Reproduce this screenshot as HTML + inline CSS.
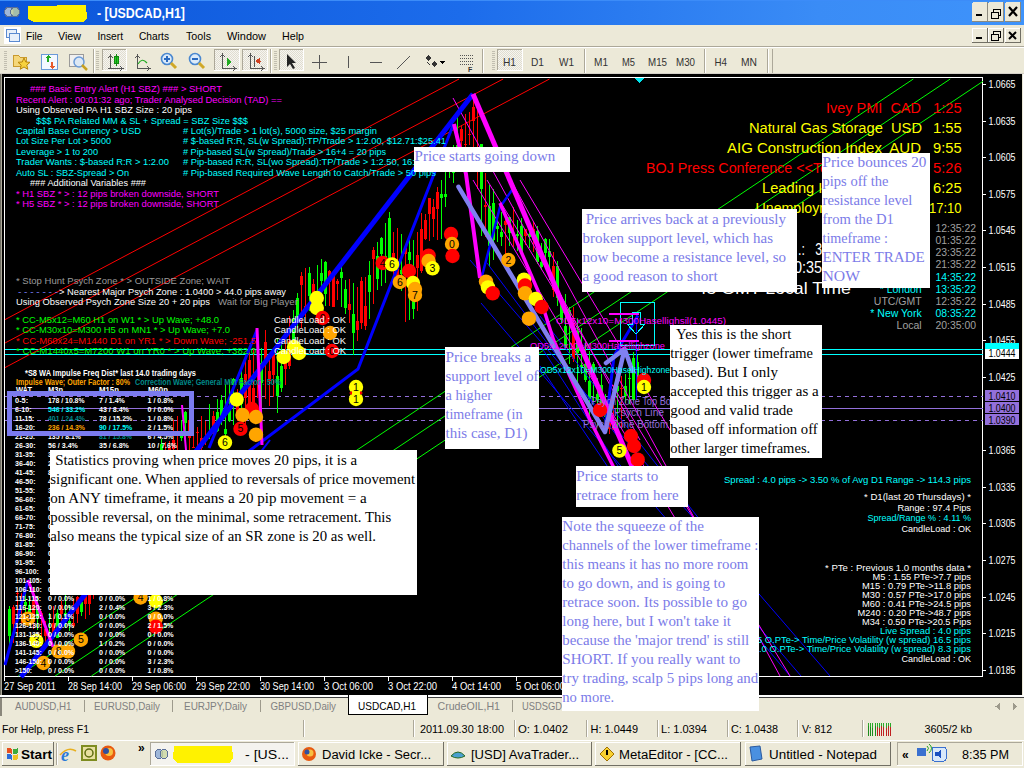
<!DOCTYPE html><html><head><meta charset="utf-8"><style>*{margin:0;padding:0}html,body{width:1024px;height:768px;overflow:hidden;background:#ECE9D8}svg{display:block;font-family:"Liberation Sans",sans-serif}text{white-space:pre}</style></head><body>
<svg width="1024" height="768" viewBox="0 0 1024 768" shape-rendering="crispEdges" text-rendering="optimizeSpeed">
<defs><linearGradient id="tg" x1="0" y1="0" x2="1" y2="0"><stop offset="0" stop-color="#0B55D9"/><stop offset="0.45" stop-color="#1C6CEB"/><stop offset="0.8" stop-color="#3A8CF6"/><stop offset="1" stop-color="#3E93FB"/></linearGradient><pattern id="chk" width="2" height="2" patternUnits="userSpaceOnUse"><rect width="2" height="2" fill="#F6F5F0"/><rect width="1" height="1" fill="#E0DDD0"/><rect x="1" y="1" width="1" height="1" fill="#E0DDD0"/></pattern></defs>
<rect x="0" y="0" width="1024" height="768" fill="#ECE9D8"/>
<rect x="0" y="0" width="1024" height="25" fill="url(#tg)"/>
<line x1="0" y1="0.5" x2="1024" y2="0.5" stroke="#3C8CF8" stroke-width="1"/>
<ellipse cx="9" cy="12" rx="4.5" ry="5" fill="#9FB7D9" stroke="#5A6F9A"/><ellipse cx="15" cy="12" rx="4.5" ry="5" fill="#C9D6A0" stroke="#5A6F9A" fill-opacity="0.8"/>
<path d="M28,6 L86,5 L87,18 L84,22 L34,22 L28,19 Z" fill="#FFF200"/>
<text x="97" y="18" fill="#fff" font-size="14" font-weight="bold" textLength="88" lengthAdjust="spacingAndGlyphs">- [USDCAD,H1]</text>
<rect x="972" y="2" width="16" height="20" fill="#ECE9D8" rx="2"/>
<line x1="972" y1="21.5" x2="988" y2="21.5" stroke="#8C8A7E" stroke-width="1"/>
<line x1="987.5" y1="2" x2="987.5" y2="22" stroke="#8C8A7E" stroke-width="1"/>
<rect x="988" y="2" width="16" height="20" fill="#ECE9D8" rx="2"/>
<line x1="988" y1="21.5" x2="1004" y2="21.5" stroke="#8C8A7E" stroke-width="1"/>
<line x1="1003.5" y1="2" x2="1003.5" y2="22" stroke="#8C8A7E" stroke-width="1"/>
<rect x="1005" y="2" width="16" height="20" fill="#ECE9D8" rx="2"/>
<line x1="1005" y1="21.5" x2="1021" y2="21.5" stroke="#8C8A7E" stroke-width="1"/>
<line x1="1020.5" y1="2" x2="1020.5" y2="22" stroke="#8C8A7E" stroke-width="1"/>
<rect x="976" y="14" width="6" height="2" fill="#000"/>
<rect x="993" y="9" width="7" height="6" fill="none" stroke="#000" stroke-width="1"/>
<rect x="991" y="12" width="7" height="6" fill="#ECE9D8" stroke="#000" stroke-width="1"/>
<path d="M1009,7 L1017,16 M1017,7 L1009,16" stroke="#000" stroke-width="2.2" shape-rendering="auto"/>
<rect x="0" y="25" width="1024" height="21" fill="#ECE9D8"/>
<rect x="4" y="27" width="17" height="17" fill="#fff"/>
<rect x="6" y="29" width="10" height="8" fill="#E8F0FA" stroke="#5A8AD0" stroke-width="1"/>
<rect x="9" y="33" width="10" height="8" fill="#E8F0FA" stroke="#5A8AD0" stroke-width="1"/>
<text x="26" y="40" fill="#000" font-size="11.5" textLength="16.5" lengthAdjust="spacingAndGlyphs">File</text>
<text x="58" y="40" fill="#000" font-size="11.5" textLength="23" lengthAdjust="spacingAndGlyphs">View</text>
<text x="97.5" y="40" fill="#000" font-size="11.5" textLength="25.5" lengthAdjust="spacingAndGlyphs">Insert</text>
<text x="139" y="40" fill="#000" font-size="11.5" textLength="30" lengthAdjust="spacingAndGlyphs">Charts</text>
<text x="186" y="40" fill="#000" font-size="11.5" textLength="25" lengthAdjust="spacingAndGlyphs">Tools</text>
<text x="227" y="40" fill="#000" font-size="11.5" textLength="39" lengthAdjust="spacingAndGlyphs">Window</text>
<text x="282" y="40" fill="#000" font-size="11.5" textLength="22" lengthAdjust="spacingAndGlyphs">Help</text>
<rect x="972" y="28" width="16" height="15" fill="#ECE9D8"/>
<line x1="972" y1="28.5" x2="988" y2="28.5" stroke="#fff" stroke-width="1"/>
<line x1="972.5" y1="28" x2="972.5" y2="43" stroke="#fff" stroke-width="1"/>
<line x1="972" y1="42.5" x2="988" y2="42.5" stroke="#716F64" stroke-width="1"/>
<line x1="987.5" y1="28" x2="987.5" y2="43" stroke="#716F64" stroke-width="1"/>
<rect x="988" y="28" width="16" height="15" fill="#ECE9D8"/>
<line x1="988" y1="28.5" x2="1004" y2="28.5" stroke="#fff" stroke-width="1"/>
<line x1="988.5" y1="28" x2="988.5" y2="43" stroke="#fff" stroke-width="1"/>
<line x1="988" y1="42.5" x2="1004" y2="42.5" stroke="#716F64" stroke-width="1"/>
<line x1="1003.5" y1="28" x2="1003.5" y2="43" stroke="#716F64" stroke-width="1"/>
<rect x="1005" y="28" width="16" height="15" fill="#ECE9D8"/>
<line x1="1005" y1="28.5" x2="1021" y2="28.5" stroke="#fff" stroke-width="1"/>
<line x1="1005.5" y1="28" x2="1005.5" y2="43" stroke="#fff" stroke-width="1"/>
<line x1="1005" y1="42.5" x2="1021" y2="42.5" stroke="#716F64" stroke-width="1"/>
<line x1="1020.5" y1="28" x2="1020.5" y2="43" stroke="#716F64" stroke-width="1"/>
<rect x="976" y="37" width="6" height="2" fill="#000"/>
<rect x="993" y="31" width="7" height="6" fill="none" stroke="#000" stroke-width="1"/>
<rect x="991" y="34" width="7" height="6" fill="#ECE9D8" stroke="#000" stroke-width="1"/>
<path d="M1009,32 L1016,39 M1016,32 L1009,39" stroke="#000" stroke-width="2" shape-rendering="auto"/>
<line x1="0" y1="46.5" x2="1024" y2="46.5" stroke="#ACA899" stroke-width="1"/>
<line x1="0" y1="47.5" x2="1024" y2="47.5" stroke="#fff" stroke-width="1"/>
<rect x="4" y="51" width="3" height="1" fill="#C1BEB0"/>
<rect x="4" y="53" width="3" height="1" fill="#C1BEB0"/>
<rect x="4" y="55" width="3" height="1" fill="#C1BEB0"/>
<rect x="4" y="57" width="3" height="1" fill="#C1BEB0"/>
<rect x="4" y="59" width="3" height="1" fill="#C1BEB0"/>
<rect x="4" y="61" width="3" height="1" fill="#C1BEB0"/>
<rect x="4" y="63" width="3" height="1" fill="#C1BEB0"/>
<rect x="4" y="65" width="3" height="1" fill="#C1BEB0"/>
<rect x="4" y="67" width="3" height="1" fill="#C1BEB0"/>
<rect x="4" y="69" width="3" height="1" fill="#C1BEB0"/>
<path d="M13,55 h5 l2,2 h6 v9 h-13 z" fill="#F5D77A" stroke="#C99A2E"/>
<path d="M24,58 l1.8,4 4.2,.3 -3.2,2.8 1,4.2 -3.8,-2.3 -3.8,2.3 1,-4.2 -3.2,-2.8 4.2,-.3z" fill="#F7D23E" stroke="#B8860B" shape-rendering="auto"/>
<rect x="41.5" y="54.5" width="16" height="15" fill="#F4F8FF" stroke="#6A9AD8" stroke-width="1"/>
<path d="M45,58 l3,-3 3,3 h-2 v4 h-2 v-4z" fill="#22AA22"/><path d="M49,66 l3,3 3,-3 h-2 v-4 h-2 v4z" fill="#E85A2A"/>
<rect x="69.5" y="54.5" width="14" height="12" fill="#F0F0F0" stroke="#9A9A9A" stroke-width="1"/>
<circle cx="79" cy="62" r="5" fill="#DDE8F4" stroke="#6A9AD8" stroke-width="1.5" shape-rendering="auto"/><path d="M82,65 l5,5" stroke="#C8A020" stroke-width="2.5" shape-rendering="auto"/>
<line x1="93.5" y1="49" x2="93.5" y2="73" stroke="#ACA899" stroke-width="1"/>
<line x1="94.5" y1="49" x2="94.5" y2="73" stroke="#fff" stroke-width="1"/>
<rect x="96" y="51" width="3" height="1" fill="#C1BEB0"/>
<rect x="96" y="53" width="3" height="1" fill="#C1BEB0"/>
<rect x="96" y="55" width="3" height="1" fill="#C1BEB0"/>
<rect x="96" y="57" width="3" height="1" fill="#C1BEB0"/>
<rect x="96" y="59" width="3" height="1" fill="#C1BEB0"/>
<rect x="96" y="61" width="3" height="1" fill="#C1BEB0"/>
<rect x="96" y="63" width="3" height="1" fill="#C1BEB0"/>
<rect x="96" y="65" width="3" height="1" fill="#C1BEB0"/>
<rect x="96" y="67" width="3" height="1" fill="#C1BEB0"/>
<rect x="96" y="69" width="3" height="1" fill="#C1BEB0"/>
<rect x="102" y="49" width="25" height="22" fill="url(#chk)"/>
<line x1="102" y1="49.5" x2="127" y2="49.5" stroke="#ACA899" stroke-width="1"/>
<line x1="102.5" y1="49" x2="102.5" y2="71" stroke="#ACA899" stroke-width="1"/>
<line x1="102" y1="70.5" x2="127" y2="70.5" stroke="#fff" stroke-width="1"/>
<line x1="126.5" y1="49" x2="126.5" y2="71" stroke="#fff" stroke-width="1"/>
<path d="M110.5,56 v12.5 h12 M108,68.5 h2.5" stroke="#555" fill="none"/><path d="M108.5,58 l2,-3 2,3 M120,66.5 l3,2 -3,2" stroke="#555" fill="none"/><rect x="114.5" y="56.5" width="4" height="7" fill="#22CC22" stroke="#118811"/><path d="M116.5,54 v12" stroke="#118811"/>
<path d="M137.5,56 v12.5 h12 M135.5,58 l2,-3 2,3 M147,66.5 l3,2 -3,2" stroke="#555" fill="none"/><path d="M138,64 q4,-7 9,-1" stroke="#22AA22" fill="none" stroke-width="1.2" shape-rendering="auto"/>
<circle cx="167" cy="59" r="5.5" fill="#DCEBFA" stroke="#4A88D0" stroke-width="1.6" shape-rendering="auto"/><path d="M171,63 l5,5" stroke="#D0A828" stroke-width="3" shape-rendering="auto"/>
<path d="M164,59 h6" stroke="#2A6AC0" stroke-width="2"/>
<path d="M167,56 v6" stroke="#2A6AC0" stroke-width="2"/>
<circle cx="195" cy="59" r="5.5" fill="#DCEBFA" stroke="#4A88D0" stroke-width="1.6" shape-rendering="auto"/><path d="M199,63 l5,5" stroke="#D0A828" stroke-width="3" shape-rendering="auto"/>
<path d="M192,59 h6" stroke="#2A6AC0" stroke-width="2"/>
<rect x="214" y="49" width="26" height="22" fill="url(#chk)"/>
<line x1="214" y1="49.5" x2="240" y2="49.5" stroke="#ACA899" stroke-width="1"/>
<line x1="214.5" y1="49" x2="214.5" y2="71" stroke="#ACA899" stroke-width="1"/>
<line x1="214" y1="70.5" x2="240" y2="70.5" stroke="#fff" stroke-width="1"/>
<line x1="239.5" y1="49" x2="239.5" y2="71" stroke="#fff" stroke-width="1"/>
<path d="M222.5,55 v13.5 h13 M220.5,57 l2,-3 2,3 M233,66.5 l3,2 -3,2" stroke="#555" fill="none"/><path d="M227,58 l5,4 -5,4z" fill="#22AA22"/>
<rect x="242" y="49" width="26" height="22" fill="url(#chk)"/>
<line x1="242" y1="49.5" x2="268" y2="49.5" stroke="#ACA899" stroke-width="1"/>
<line x1="242.5" y1="49" x2="242.5" y2="71" stroke="#ACA899" stroke-width="1"/>
<line x1="242" y1="70.5" x2="268" y2="70.5" stroke="#fff" stroke-width="1"/>
<line x1="267.5" y1="49" x2="267.5" y2="71" stroke="#fff" stroke-width="1"/>
<path d="M250.5,55 v13.5 h13 M248.5,57 l2,-3 2,3 M261,66.5 l3,2 -3,2" stroke="#555" fill="none"/><path d="M254,56 v11" stroke="#555"/><path d="M261,61 l-5,0 M256,61 l3,-2 v4z" stroke="#D04020" fill="#D04020"/>
<line x1="270.5" y1="49" x2="270.5" y2="73" stroke="#ACA899" stroke-width="1"/>
<line x1="271.5" y1="49" x2="271.5" y2="73" stroke="#fff" stroke-width="1"/>
<rect x="274" y="51" width="3" height="1" fill="#C1BEB0"/>
<rect x="274" y="53" width="3" height="1" fill="#C1BEB0"/>
<rect x="274" y="55" width="3" height="1" fill="#C1BEB0"/>
<rect x="274" y="57" width="3" height="1" fill="#C1BEB0"/>
<rect x="274" y="59" width="3" height="1" fill="#C1BEB0"/>
<rect x="274" y="61" width="3" height="1" fill="#C1BEB0"/>
<rect x="274" y="63" width="3" height="1" fill="#C1BEB0"/>
<rect x="274" y="65" width="3" height="1" fill="#C1BEB0"/>
<rect x="274" y="67" width="3" height="1" fill="#C1BEB0"/>
<rect x="274" y="69" width="3" height="1" fill="#C1BEB0"/>
<rect x="279" y="49" width="25" height="22" fill="url(#chk)"/>
<line x1="279" y1="49.5" x2="304" y2="49.5" stroke="#ACA899" stroke-width="1"/>
<line x1="279.5" y1="49" x2="279.5" y2="71" stroke="#ACA899" stroke-width="1"/>
<line x1="279" y1="70.5" x2="304" y2="70.5" stroke="#fff" stroke-width="1"/>
<line x1="303.5" y1="49" x2="303.5" y2="71" stroke="#fff" stroke-width="1"/>
<path d="M287,54 l0,13 3,-3 3,5 2,-1 -3,-5 4,0z" fill="#222" shape-rendering="auto"/>
<path d="M312,62 h15 M319.5,55 v14" stroke="#555"/>
<path d="M348.5,56 v12" stroke="#555"/>
<path d="M370,62.5 h12" stroke="#555"/>
<path d="M397,69 l13,-13" stroke="#555" shape-rendering="auto"/>
<path d="M425,58 l3,-3 3,3 -3,3z M431,64 l3,-3 3,3 -3,3z" fill="#333"/><path d="M427,62 l3,3" stroke="#333"/><path d="M440,61 h5 l-2.5,3z" fill="#000"/>
<path d="M460,55.5 h14" stroke="#555" stroke-dasharray="1,1"/>
<path d="M460,58.5 h14" stroke="#555" stroke-dasharray="1,1"/>
<path d="M460,61.5 h14" stroke="#555" stroke-dasharray="1,1"/>
<path d="M460,64.5 h14" stroke="#555" stroke-dasharray="1,1"/>
<text x="468" y="72" fill="#333" font-size="7" font-weight="bold">F</text>
<line x1="482.5" y1="49" x2="482.5" y2="73" stroke="#ACA899" stroke-width="1"/>
<line x1="483.5" y1="49" x2="483.5" y2="73" stroke="#fff" stroke-width="1"/>
<rect x="492" y="51" width="3" height="1" fill="#C1BEB0"/>
<rect x="492" y="53" width="3" height="1" fill="#C1BEB0"/>
<rect x="492" y="55" width="3" height="1" fill="#C1BEB0"/>
<rect x="492" y="57" width="3" height="1" fill="#C1BEB0"/>
<rect x="492" y="59" width="3" height="1" fill="#C1BEB0"/>
<rect x="492" y="61" width="3" height="1" fill="#C1BEB0"/>
<rect x="492" y="63" width="3" height="1" fill="#C1BEB0"/>
<rect x="492" y="65" width="3" height="1" fill="#C1BEB0"/>
<rect x="492" y="67" width="3" height="1" fill="#C1BEB0"/>
<rect x="492" y="69" width="3" height="1" fill="#C1BEB0"/>
<rect x="497" y="49" width="26" height="22" fill="url(#chk)"/>
<line x1="497" y1="49.5" x2="523" y2="49.5" stroke="#ACA899" stroke-width="1"/>
<line x1="497.5" y1="49" x2="497.5" y2="71" stroke="#ACA899" stroke-width="1"/>
<line x1="497" y1="70.5" x2="523" y2="70.5" stroke="#fff" stroke-width="1"/>
<line x1="522.5" y1="49" x2="522.5" y2="71" stroke="#fff" stroke-width="1"/>
<text x="503" y="65.5" fill="#333" font-size="10.5" textLength="13" lengthAdjust="spacingAndGlyphs">H1</text>
<text x="531" y="65.5" fill="#333" font-size="10.5" textLength="13" lengthAdjust="spacingAndGlyphs">D1</text>
<text x="559" y="65.5" fill="#333" font-size="10.5" textLength="15" lengthAdjust="spacingAndGlyphs">W1</text>
<text x="594" y="65.5" fill="#333" font-size="10.5" textLength="14" lengthAdjust="spacingAndGlyphs">M1</text>
<text x="622" y="65.5" fill="#333" font-size="10.5" textLength="13" lengthAdjust="spacingAndGlyphs">M5</text>
<text x="648" y="65.5" fill="#333" font-size="10.5" textLength="19" lengthAdjust="spacingAndGlyphs">M15</text>
<text x="676" y="65.5" fill="#333" font-size="10.5" textLength="19" lengthAdjust="spacingAndGlyphs">M30</text>
<text x="714.5" y="65.5" fill="#333" font-size="10.5" textLength="12.5" lengthAdjust="spacingAndGlyphs">H4</text>
<text x="741" y="65.5" fill="#333" font-size="10.5" textLength="16" lengthAdjust="spacingAndGlyphs">MN</text>
<line x1="584.5" y1="49" x2="584.5" y2="73" stroke="#ACA899" stroke-width="1"/>
<line x1="585.5" y1="49" x2="585.5" y2="73" stroke="#fff" stroke-width="1"/>
<line x1="704.5" y1="49" x2="704.5" y2="73" stroke="#ACA899" stroke-width="1"/>
<line x1="705.5" y1="49" x2="705.5" y2="73" stroke="#fff" stroke-width="1"/>
<line x1="767.5" y1="49" x2="767.5" y2="73" stroke="#ACA899" stroke-width="1"/>
<line x1="768.5" y1="49" x2="768.5" y2="73" stroke="#fff" stroke-width="1"/>
<line x1="772.5" y1="49" x2="772.5" y2="73" stroke="#ACA899" stroke-width="1"/>
<line x1="0" y1="73.5" x2="1024" y2="73.5" stroke="#D4D0C8" stroke-width="1"/>
<rect x="0" y="74" width="1024" height="622" fill="#000"/>
<line x1="0.5" y1="74" x2="0.5" y2="696" stroke="#716F64" stroke-width="1"/>
<line x1="1.5" y1="74" x2="1.5" y2="696" stroke="#ACA899" stroke-width="1"/>
<line x1="1023.5" y1="74" x2="1023.5" y2="696" stroke="#fff" stroke-width="1"/>
<line x1="1022.5" y1="74" x2="1022.5" y2="696" stroke="#ECE9D8" stroke-width="1"/>
<rect x="0" y="695" width="1024" height="2" fill="#fff"/>
<rect x="0" y="697" width="1024" height="1" fill="#404040"/>
<rect x="0" y="698" width="1024" height="18" fill="#ECE9D8"/>
<rect x="0" y="698" width="2" height="18" fill="#8A877B"/>
<line x1="0" y1="716.5" x2="1024" y2="716.5" stroke="#fff" stroke-width="1"/>
<text x="15" y="710" fill="#808080" font-size="11" textLength="56.5" lengthAdjust="spacingAndGlyphs">AUDUSD,H1</text>
<line x1="84.5" y1="700" x2="84.5" y2="712" stroke="#9D9A8C" stroke-width="1"/>
<text x="94" y="710" fill="#808080" font-size="11" textLength="66" lengthAdjust="spacingAndGlyphs">EURUSD,Daily</text>
<line x1="172.5" y1="700" x2="172.5" y2="712" stroke="#9D9A8C" stroke-width="1"/>
<text x="184" y="710" fill="#808080" font-size="11" textLength="63" lengthAdjust="spacingAndGlyphs">EURJPY,Daily</text>
<line x1="260.5" y1="700" x2="260.5" y2="712" stroke="#9D9A8C" stroke-width="1"/>
<text x="270.5" y="710" fill="#808080" font-size="11" textLength="65.5" lengthAdjust="spacingAndGlyphs">GBPUSD,Daily</text>
<text x="437.5" y="710" fill="#808080" font-size="11" textLength="62.5" lengthAdjust="spacingAndGlyphs">CrudeOIL,H1</text>
<line x1="512.5" y1="700" x2="512.5" y2="712" stroke="#9D9A8C" stroke-width="1"/>
<text x="522" y="710" fill="#808080" font-size="11" textLength="40" lengthAdjust="spacingAndGlyphs">USDSGD</text>
<rect x="348" y="695" width="80" height="20" fill="#fff"/>
<line x1="348.5" y1="695" x2="348.5" y2="715" stroke="#000" stroke-width="1"/>
<line x1="427.5" y1="695" x2="427.5" y2="715" stroke="#000" stroke-width="1"/>
<line x1="348" y1="714.5" x2="428" y2="714.5" stroke="#000" stroke-width="1"/>
<text x="358" y="710" fill="#000" font-size="11" textLength="58" lengthAdjust="spacingAndGlyphs">USDCAD,H1</text>
<path d="M999.5,703 l-4,3.5 4,3.5z M1013,703 l4,3.5 -4,3.5z" fill="#9D9A8C"/>
<rect x="0" y="716" width="1024" height="24" fill="#ECE9D8"/>
<text x="2" y="733" fill="#000" font-size="11.5" textLength="87" lengthAdjust="spacingAndGlyphs">For Help, press F1</text>
<line x1="303.5" y1="720" x2="303.5" y2="737" stroke="#ACA899" stroke-width="1"/>
<line x1="304.5" y1="720" x2="304.5" y2="737" stroke="#fff" stroke-width="1"/>
<line x1="413.5" y1="720" x2="413.5" y2="737" stroke="#ACA899" stroke-width="1"/>
<line x1="414.5" y1="720" x2="414.5" y2="737" stroke="#fff" stroke-width="1"/>
<line x1="514.5" y1="720" x2="514.5" y2="737" stroke="#ACA899" stroke-width="1"/>
<line x1="515.5" y1="720" x2="515.5" y2="737" stroke="#fff" stroke-width="1"/>
<line x1="586.5" y1="720" x2="586.5" y2="737" stroke="#ACA899" stroke-width="1"/>
<line x1="587.5" y1="720" x2="587.5" y2="737" stroke="#fff" stroke-width="1"/>
<line x1="657.5" y1="720" x2="657.5" y2="737" stroke="#ACA899" stroke-width="1"/>
<line x1="658.5" y1="720" x2="658.5" y2="737" stroke="#fff" stroke-width="1"/>
<line x1="727.5" y1="720" x2="727.5" y2="737" stroke="#ACA899" stroke-width="1"/>
<line x1="728.5" y1="720" x2="728.5" y2="737" stroke="#fff" stroke-width="1"/>
<line x1="797.5" y1="720" x2="797.5" y2="737" stroke="#ACA899" stroke-width="1"/>
<line x1="798.5" y1="720" x2="798.5" y2="737" stroke="#fff" stroke-width="1"/>
<line x1="862.5" y1="720" x2="862.5" y2="737" stroke="#ACA899" stroke-width="1"/>
<line x1="863.5" y1="720" x2="863.5" y2="737" stroke="#fff" stroke-width="1"/>
<text x="420" y="733" fill="#000" font-size="11.5" textLength="84" lengthAdjust="spacingAndGlyphs">2011.09.30 18:00</text>
<text x="518" y="733" fill="#000" font-size="11.5" textLength="50" lengthAdjust="spacingAndGlyphs">O: 1.0402</text>
<text x="590.5" y="733" fill="#000" font-size="11.5" textLength="47.5" lengthAdjust="spacingAndGlyphs">H: 1.0449</text>
<text x="661" y="733" fill="#000" font-size="11.5" textLength="46" lengthAdjust="spacingAndGlyphs">L: 1.0394</text>
<text x="731" y="733" fill="#000" font-size="11.5" textLength="47" lengthAdjust="spacingAndGlyphs">C: 1.0438</text>
<text x="802" y="733" fill="#000" font-size="11.5" textLength="30" lengthAdjust="spacingAndGlyphs">V: 812</text>
<text x="924.5" y="733" fill="#000" font-size="11.5" textLength="47.5" lengthAdjust="spacingAndGlyphs">3605/2 kb</text>
<rect x="868" y="723" width="1" height="13" fill="#1E8C1E"/>
<rect x="868" y="723" width="1" height="3" fill="#2AAA2A"/>
<rect x="870" y="723" width="1" height="13" fill="#1E8C1E"/>
<rect x="870" y="723" width="1" height="4" fill="#2AAA2A"/>
<rect x="872" y="723" width="1" height="13" fill="#1E8C1E"/>
<rect x="872" y="723" width="1" height="5" fill="#2AAA2A"/>
<rect x="875" y="723" width="1" height="13" fill="#1E8C1E"/>
<rect x="875" y="723" width="1" height="3" fill="#2AAA2A"/>
<rect x="877" y="723" width="1" height="13" fill="#C02020"/>
<rect x="877" y="723" width="1" height="4" fill="#2AAA2A"/>
<rect x="879" y="723" width="1" height="13" fill="#C02020"/>
<rect x="879" y="723" width="1" height="5" fill="#2AAA2A"/>
<rect x="881" y="723" width="1" height="13" fill="#C02020"/>
<rect x="881" y="723" width="1" height="3" fill="#2AAA2A"/>
<rect x="883" y="723" width="1" height="13" fill="#C02020"/>
<rect x="883" y="723" width="1" height="4" fill="#2AAA2A"/>
<rect x="886" y="723" width="1" height="13" fill="#C02020"/>
<rect x="886" y="723" width="1" height="5" fill="#2AAA2A"/>
<rect x="888" y="723" width="1" height="13" fill="#C02020"/>
<rect x="888" y="723" width="1" height="3" fill="#2AAA2A"/>
<rect x="890" y="723" width="1" height="13" fill="#C02020"/>
<rect x="890" y="723" width="1" height="4" fill="#2AAA2A"/>
<rect x="0" y="740" width="1024" height="28" fill="#ECE9D8"/>
<line x1="0" y1="740.5" x2="1024" y2="740.5" stroke="#fff" stroke-width="1"/>
<rect x="2" y="742" width="52" height="24" fill="#ECE9D8"/>
<line x1="2" y1="742.5" x2="54" y2="742.5" stroke="#fff" stroke-width="1"/>
<line x1="2.5" y1="742" x2="2.5" y2="766" stroke="#fff" stroke-width="1"/>
<line x1="2" y1="765.5" x2="54" y2="765.5" stroke="#716F64" stroke-width="1"/>
<line x1="53.5" y1="742" x2="53.5" y2="766" stroke="#716F64" stroke-width="1"/>
<path d="M7,748 q3,-1 5,1 v5 q-2,-2 -5,-1z" fill="#E8501E"/><path d="M13,749 q3,1 5,-1 v5 q-2,2 -5,1z" fill="#3CAA3C"/><path d="M7,754 q3,-1 5,1 v5 q-2,-2 -5,-1z" fill="#2C6CD8"/><path d="M13,755 q3,1 5,-1 v5 q-2,2 -5,1z" fill="#F0C020"/>
<text x="21" y="759" fill="#000" font-size="13" font-weight="bold" textLength="31" lengthAdjust="spacingAndGlyphs">Start</text>
<line x1="56.5" y1="743" x2="56.5" y2="765" stroke="#ACA899" stroke-width="1"/>
<line x1="57.5" y1="743" x2="57.5" y2="765" stroke="#fff" stroke-width="1"/>
<text x="61" y="761" fill="#2A7AD8" font-size="18" font-weight="bold" font-style="italic" font-family="Liberation Serif">e</text>
<path d="M60,755 q8,-9 16,-4" stroke="#E8B020" stroke-width="1.5" fill="none" shape-rendering="auto"/>
<rect x="81" y="745" width="16" height="16" fill="#7E8C20"/>
<rect x="83" y="747" width="12" height="12" fill="#E8E0A0"/>
<circle cx="89" cy="753" r="4" fill="none" stroke="#5E6C10" stroke-width="1.5" shape-rendering="auto"/>
<circle cx="108" cy="753" r="7.5" fill="#E85A10" shape-rendering="auto"/><circle cx="109" cy="752" r="4" fill="#F8C040" shape-rendering="auto"/><circle cx="106" cy="751" r="3" fill="#3050A0" shape-rendering="auto"/>
<text x="138" y="752" fill="#000" font-size="12" font-weight="bold">»</text>
<rect x="150" y="742" width="145" height="24" fill="#F4F3EE"/>
<line x1="150" y1="742.5" x2="295" y2="742.5" stroke="#ACA899" stroke-width="1"/>
<line x1="150.5" y1="742" x2="150.5" y2="766" stroke="#ACA899" stroke-width="1"/>
<line x1="150" y1="765.5" x2="295" y2="765.5" stroke="#fff" stroke-width="1"/>
<line x1="294.5" y1="742" x2="294.5" y2="766" stroke="#fff" stroke-width="1"/>
<ellipse cx="159" cy="754" rx="4" ry="4.5" fill="#9FB7D9" stroke="#5A6F9A"/><ellipse cx="164" cy="754" rx="4" ry="4.5" fill="#C9D6A0" stroke="#5A6F9A" fill-opacity="0.8"/>
<path d="M174,746 L232,746 L233,758 L230,763 L178,763 L173,759 Z" fill="#FFF200"/>
<text x="245" y="759" fill="#000" font-size="12" textLength="44" lengthAdjust="spacingAndGlyphs">- [US...</text>
<rect x="298" y="742" width="146" height="24" fill="#ECE9D8"/>
<line x1="298" y1="742.5" x2="444" y2="742.5" stroke="#fff" stroke-width="1"/>
<line x1="298.5" y1="742" x2="298.5" y2="766" stroke="#fff" stroke-width="1"/>
<line x1="298" y1="765.5" x2="444" y2="765.5" stroke="#716F64" stroke-width="1"/>
<line x1="443.5" y1="742" x2="443.5" y2="766" stroke="#716F64" stroke-width="1"/>
<text x="322" y="759" fill="#000" font-size="12" textLength="109" lengthAdjust="spacingAndGlyphs">David Icke - Secr...</text>
<rect x="447" y="742" width="145" height="24" fill="#ECE9D8"/>
<line x1="447" y1="742.5" x2="592" y2="742.5" stroke="#fff" stroke-width="1"/>
<line x1="447.5" y1="742" x2="447.5" y2="766" stroke="#fff" stroke-width="1"/>
<line x1="447" y1="765.5" x2="592" y2="765.5" stroke="#716F64" stroke-width="1"/>
<line x1="591.5" y1="742" x2="591.5" y2="766" stroke="#716F64" stroke-width="1"/>
<text x="471" y="759" fill="#000" font-size="12" textLength="108" lengthAdjust="spacingAndGlyphs">[USD] AvaTrader...</text>
<rect x="595" y="742" width="146" height="24" fill="#ECE9D8"/>
<line x1="595" y1="742.5" x2="741" y2="742.5" stroke="#fff" stroke-width="1"/>
<line x1="595.5" y1="742" x2="595.5" y2="766" stroke="#fff" stroke-width="1"/>
<line x1="595" y1="765.5" x2="741" y2="765.5" stroke="#716F64" stroke-width="1"/>
<line x1="740.5" y1="742" x2="740.5" y2="766" stroke="#716F64" stroke-width="1"/>
<text x="619" y="759" fill="#000" font-size="12" textLength="109" lengthAdjust="spacingAndGlyphs">MetaEditor - [CC...</text>
<rect x="745" y="742" width="146" height="24" fill="#ECE9D8"/>
<line x1="745" y1="742.5" x2="891" y2="742.5" stroke="#fff" stroke-width="1"/>
<line x1="745.5" y1="742" x2="745.5" y2="766" stroke="#fff" stroke-width="1"/>
<line x1="745" y1="765.5" x2="891" y2="765.5" stroke="#716F64" stroke-width="1"/>
<line x1="890.5" y1="742" x2="890.5" y2="766" stroke="#716F64" stroke-width="1"/>
<text x="769" y="759" fill="#000" font-size="12" textLength="108" lengthAdjust="spacingAndGlyphs">Untitled - Notepad</text>
<circle cx="309" cy="754" r="7" fill="#E85A10" shape-rendering="auto"/><circle cx="310" cy="753" r="3.5" fill="#F8C040" shape-rendering="auto"/><circle cx="307" cy="752" r="2.5" fill="#3050A0" shape-rendering="auto"/>
<path d="M451,756 q7,-8 14,0 q-7,4 -14,0z" fill="#4AA0D0" stroke="#2A6A20" shape-rendering="auto"/>
<path d="M607,747 l7,7 -7,7 -7,-7z" fill="#F8D030" stroke="#A07000" shape-rendering="auto"/><path d="M607,750 v5" stroke="#000" stroke-width="1.5"/>
<path d="M750,747 l10,-1 2,13 -10,2z" fill="#4A90E0" stroke="#2A5AA0" shape-rendering="auto"/>
<line x1="897" y1="742.5" x2="1023" y2="742.5" stroke="#ACA899" stroke-width="1"/>
<line x1="897.5" y1="742" x2="897.5" y2="766" stroke="#ACA899" stroke-width="1"/>
<line x1="897" y1="765.5" x2="1023" y2="765.5" stroke="#fff" stroke-width="1"/>
<line x1="1022.5" y1="742" x2="1022.5" y2="766" stroke="#fff" stroke-width="1"/>
<text x="902" y="759" fill="#000" font-size="12" font-weight="bold">«</text>
<rect x="917" y="748" width="9" height="8" fill="#3A70D0"/><path d="M927,746 q3,2 0,5 M929,744 q5,4 0,9" stroke="#20A020" fill="none" shape-rendering="auto"/>
<rect x="932" y="747" width="14" height="14" fill="#D8E8FA" stroke="#3A70D0" rx="2"/><path d="M935,752 h3 l3,-3 v10 l-3,-3 h-3z" fill="#1A50C0"/>
<text x="962" y="759" fill="#000" font-size="12" textLength="47" lengthAdjust="spacingAndGlyphs">8:35 PM</text>
<line x1="4" y1="77.5" x2="983" y2="77.5" stroke="#fff" stroke-width="1"/>
<line x1="4.5" y1="77" x2="4.5" y2="677" stroke="#fff" stroke-width="1"/>
<line x1="982.5" y1="77" x2="982.5" y2="677" stroke="#fff" stroke-width="1"/>
<line x1="4" y1="676.5" x2="983" y2="676.5" stroke="#fff" stroke-width="1"/>
<path d="M635,78 h9 l-4.5,5z" fill="#00E5EE"/>
<line x1="983" y1="84.5" x2="986" y2="84.5" stroke="#fff" stroke-width="1"/>
<text x="988.5" y="88" fill="#fff" font-size="10" textLength="27" lengthAdjust="spacingAndGlyphs">1.0665</text>
<line x1="983" y1="121.5" x2="986" y2="121.5" stroke="#fff" stroke-width="1"/>
<text x="988.5" y="125" fill="#fff" font-size="10" textLength="27" lengthAdjust="spacingAndGlyphs">1.0635</text>
<line x1="983" y1="157.5" x2="986" y2="157.5" stroke="#fff" stroke-width="1"/>
<text x="988.5" y="161" fill="#fff" font-size="10" textLength="27" lengthAdjust="spacingAndGlyphs">1.0605</text>
<line x1="983" y1="194.5" x2="986" y2="194.5" stroke="#fff" stroke-width="1"/>
<text x="988.5" y="198" fill="#fff" font-size="10" textLength="27" lengthAdjust="spacingAndGlyphs">1.0575</text>
<line x1="983" y1="230.5" x2="986" y2="230.5" stroke="#fff" stroke-width="1"/>
<text x="988.5" y="234" fill="#fff" font-size="10" textLength="27" lengthAdjust="spacingAndGlyphs">1.0545</text>
<line x1="983" y1="267.5" x2="986" y2="267.5" stroke="#fff" stroke-width="1"/>
<text x="988.5" y="271" fill="#fff" font-size="10" textLength="27" lengthAdjust="spacingAndGlyphs">1.0515</text>
<line x1="983" y1="304.5" x2="986" y2="304.5" stroke="#fff" stroke-width="1"/>
<text x="988.5" y="308" fill="#fff" font-size="10" textLength="27" lengthAdjust="spacingAndGlyphs">1.0485</text>
<line x1="983" y1="340.5" x2="986" y2="340.5" stroke="#fff" stroke-width="1"/>
<text x="988.5" y="344" fill="#fff" font-size="10" textLength="27" lengthAdjust="spacingAndGlyphs">1.0455</text>
<line x1="983" y1="377.5" x2="986" y2="377.5" stroke="#fff" stroke-width="1"/>
<text x="988.5" y="381" fill="#fff" font-size="10" textLength="27" lengthAdjust="spacingAndGlyphs">1.0425</text>
<line x1="983" y1="450.5" x2="986" y2="450.5" stroke="#fff" stroke-width="1"/>
<text x="988.5" y="454" fill="#fff" font-size="10" textLength="27" lengthAdjust="spacingAndGlyphs">1.0365</text>
<line x1="983" y1="487.5" x2="986" y2="487.5" stroke="#fff" stroke-width="1"/>
<text x="988.5" y="491" fill="#fff" font-size="10" textLength="27" lengthAdjust="spacingAndGlyphs">1.0335</text>
<line x1="983" y1="523.5" x2="986" y2="523.5" stroke="#fff" stroke-width="1"/>
<text x="988.5" y="527" fill="#fff" font-size="10" textLength="27" lengthAdjust="spacingAndGlyphs">1.0305</text>
<line x1="983" y1="560.5" x2="986" y2="560.5" stroke="#fff" stroke-width="1"/>
<text x="988.5" y="564" fill="#fff" font-size="10" textLength="27" lengthAdjust="spacingAndGlyphs">1.0275</text>
<line x1="983" y1="597.5" x2="986" y2="597.5" stroke="#fff" stroke-width="1"/>
<text x="988.5" y="601" fill="#fff" font-size="10" textLength="27" lengthAdjust="spacingAndGlyphs">1.0245</text>
<line x1="983" y1="633.5" x2="986" y2="633.5" stroke="#fff" stroke-width="1"/>
<text x="988.5" y="637" fill="#fff" font-size="10" textLength="27" lengthAdjust="spacingAndGlyphs">1.0215</text>
<line x1="983" y1="670.5" x2="986" y2="670.5" stroke="#fff" stroke-width="1"/>
<text x="988.5" y="674" fill="#fff" font-size="10" textLength="27" lengthAdjust="spacingAndGlyphs">1.0185</text>
<rect x="985" y="343" width="34" height="6" fill="#00FFFF"/>
<rect x="985" y="348.5" width="34" height="10.5" fill="#fff"/>
<text x="988.5" y="357" fill="#000" font-size="10" textLength="27" lengthAdjust="spacingAndGlyphs">1.0444</text>
<rect x="985" y="390" width="34" height="11" fill="#9370DB"/>
<text x="988.5" y="399.5" fill="#000" font-size="10" textLength="27" lengthAdjust="spacingAndGlyphs">1.0410</text>
<rect x="985" y="402" width="34" height="11" fill="#9370DB"/>
<text x="988.5" y="411.5" fill="#000" font-size="10" textLength="27" lengthAdjust="spacingAndGlyphs">1.0400</text>
<rect x="985" y="414" width="34" height="11" fill="#9370DB"/>
<text x="988.5" y="423.5" fill="#000" font-size="10" textLength="27" lengthAdjust="spacingAndGlyphs">1.0390</text>
<line x1="4.5" y1="677" x2="4.5" y2="681" stroke="#fff" stroke-width="1"/>
<text x="4" y="690" fill="#fff" font-size="10" textLength="52" lengthAdjust="spacingAndGlyphs">27 Sep 2011</text>
<line x1="68.5" y1="677" x2="68.5" y2="681" stroke="#fff" stroke-width="1"/>
<text x="68" y="690" fill="#fff" font-size="10" textLength="54" lengthAdjust="spacingAndGlyphs">28 Sep 14:00</text>
<line x1="132.5" y1="677" x2="132.5" y2="681" stroke="#fff" stroke-width="1"/>
<text x="132" y="690" fill="#fff" font-size="10" textLength="54" lengthAdjust="spacingAndGlyphs">29 Sep 06:00</text>
<line x1="196.5" y1="677" x2="196.5" y2="681" stroke="#fff" stroke-width="1"/>
<text x="196" y="690" fill="#fff" font-size="10" textLength="54" lengthAdjust="spacingAndGlyphs">29 Sep 22:00</text>
<line x1="260.5" y1="677" x2="260.5" y2="681" stroke="#fff" stroke-width="1"/>
<text x="260" y="690" fill="#fff" font-size="10" textLength="54" lengthAdjust="spacingAndGlyphs">30 Sep 14:00</text>
<line x1="324.5" y1="677" x2="324.5" y2="681" stroke="#fff" stroke-width="1"/>
<text x="324" y="690" fill="#fff" font-size="10" textLength="49" lengthAdjust="spacingAndGlyphs">3 Oct 06:00</text>
<line x1="388.5" y1="677" x2="388.5" y2="681" stroke="#fff" stroke-width="1"/>
<text x="388" y="690" fill="#fff" font-size="10" textLength="49" lengthAdjust="spacingAndGlyphs">3 Oct 22:00</text>
<line x1="452.5" y1="677" x2="452.5" y2="681" stroke="#fff" stroke-width="1"/>
<text x="452" y="690" fill="#fff" font-size="10" textLength="49" lengthAdjust="spacingAndGlyphs">4 Oct 14:00</text>
<line x1="516.5" y1="677" x2="516.5" y2="681" stroke="#fff" stroke-width="1"/>
<text x="516" y="690" fill="#fff" font-size="10" textLength="49" lengthAdjust="spacingAndGlyphs">5 Oct 06:00</text>
<line x1="5" y1="349.5" x2="983" y2="349.5" stroke="#00FFFF" stroke-width="1.2"/>
<line x1="5" y1="354.5" x2="983" y2="354.5" stroke="#00FFFF" stroke-width="1.2"/>
<line x1="5" y1="396.5" x2="983" y2="396.5" stroke="#9370DB" stroke-width="1" stroke-dasharray="4,4"/>
<line x1="5" y1="408.5" x2="983" y2="408.5" stroke="#9370DB" stroke-width="1"/>
<line x1="5" y1="420.5" x2="983" y2="420.5" stroke="#9370DB" stroke-width="1" stroke-dasharray="4,4"/>
<g shape-rendering="auto">
<line x1="5" y1="319.6" x2="459.0" y2="79" stroke="#FF0000" stroke-width="1"/>
<line x1="5" y1="343.0" x2="503.1" y2="79" stroke="#FF0000" stroke-width="1"/>
<line x1="5" y1="367.6" x2="549.5" y2="79" stroke="#FF0000" stroke-width="1"/>
<line x1="18.2" y1="676" x2="913.3" y2="79" stroke="#00FF00" stroke-width="1"/>
<line x1="55.1" y1="676" x2="950.2" y2="79" stroke="#00FF00" stroke-width="1"/>
<line x1="91.4" y1="676" x2="983" y2="81.3" stroke="#00FF00" stroke-width="1"/>
</g>
<rect x="9" y="606" width="1" height="46" fill="#00FF00"/>
<rect x="8" y="609" width="3" height="27" fill="#00FF00"/>
<rect x="13" y="605" width="1" height="38" fill="#FF0000"/>
<rect x="12" y="607" width="3" height="17" fill="#FF0000"/>
<rect x="17" y="590" width="1" height="46" fill="#FF0000"/>
<rect x="16" y="593" width="3" height="1" fill="#FF0000"/>
<rect x="21" y="593" width="1" height="30" fill="#FF0000"/>
<rect x="20" y="596" width="3" height="3" fill="#FF0000"/>
<rect x="25" y="593" width="1" height="22" fill="#00FF00"/>
<rect x="24" y="602" width="3" height="4" fill="#00FF00"/>
<rect x="29" y="596" width="1" height="30" fill="#00FF00"/>
<rect x="28" y="605" width="3" height="17" fill="#00FF00"/>
<rect x="33" y="588" width="1" height="41" fill="#FF0000"/>
<rect x="32" y="601" width="3" height="21" fill="#FF0000"/>
<rect x="37" y="597" width="1" height="33" fill="#00FF00"/>
<rect x="36" y="609" width="3" height="9" fill="#00FF00"/>
<rect x="41" y="611" width="1" height="35" fill="#FF0000"/>
<rect x="40" y="613" width="3" height="5" fill="#FF0000"/>
<rect x="45" y="621" width="1" height="28" fill="#FF0000"/>
<rect x="44" y="629" width="3" height="7" fill="#FF0000"/>
<rect x="49" y="613" width="1" height="33" fill="#00FF00"/>
<rect x="48" y="636" width="3" height="3" fill="#00FF00"/>
<rect x="53" y="606" width="1" height="32" fill="#FF0000"/>
<rect x="52" y="623" width="3" height="11" fill="#FF0000"/>
<rect x="57" y="609" width="1" height="29" fill="#00FF00"/>
<rect x="56" y="613" width="3" height="25" fill="#00FF00"/>
<rect x="61" y="601" width="1" height="26" fill="#FF0000"/>
<rect x="60" y="605" width="3" height="9" fill="#FF0000"/>
<rect x="65" y="594" width="1" height="34" fill="#00FF00"/>
<rect x="64" y="613" width="3" height="6" fill="#00FF00"/>
<rect x="69" y="605" width="1" height="26" fill="#00FF00"/>
<rect x="68" y="621" width="3" height="3" fill="#00FF00"/>
<rect x="73" y="599" width="1" height="29" fill="#FF0000"/>
<rect x="72" y="623" width="3" height="3" fill="#FF0000"/>
<rect x="77" y="596" width="1" height="27" fill="#FF0000"/>
<rect x="76" y="597" width="3" height="17" fill="#FF0000"/>
<rect x="81" y="597" width="1" height="19" fill="#00FF00"/>
<rect x="80" y="602" width="3" height="10" fill="#00FF00"/>
<rect x="85" y="591" width="1" height="28" fill="#FF0000"/>
<rect x="84" y="592" width="3" height="12" fill="#FF0000"/>
<rect x="89" y="571" width="1" height="44" fill="#FF0000"/>
<rect x="88" y="573" width="3" height="31" fill="#FF0000"/>
<rect x="93" y="553" width="1" height="46" fill="#FF0000"/>
<rect x="92" y="571" width="3" height="22" fill="#FF0000"/>
<rect x="97" y="535" width="1" height="46" fill="#FF0000"/>
<rect x="96" y="560" width="3" height="16" fill="#FF0000"/>
<rect x="101" y="536" width="1" height="25" fill="#FF0000"/>
<rect x="100" y="543" width="3" height="3" fill="#FF0000"/>
<rect x="105" y="521" width="1" height="34" fill="#00FF00"/>
<rect x="104" y="526" width="3" height="27" fill="#00FF00"/>
<rect x="109" y="512" width="1" height="51" fill="#FF0000"/>
<rect x="108" y="524" width="3" height="13" fill="#FF0000"/>
<rect x="113" y="515" width="1" height="42" fill="#FF0000"/>
<rect x="112" y="515" width="3" height="17" fill="#FF0000"/>
<rect x="117" y="505" width="1" height="40" fill="#00FF00"/>
<rect x="116" y="533" width="3" height="11" fill="#00FF00"/>
<rect x="121" y="503" width="1" height="36" fill="#00FF00"/>
<rect x="120" y="505" width="3" height="23" fill="#00FF00"/>
<rect x="125" y="506" width="1" height="25" fill="#00FF00"/>
<rect x="124" y="525" width="3" height="2" fill="#00FF00"/>
<rect x="129" y="490" width="1" height="43" fill="#FF0000"/>
<rect x="128" y="494" width="3" height="23" fill="#FF0000"/>
<rect x="133" y="477" width="1" height="57" fill="#00FF00"/>
<rect x="132" y="487" width="3" height="3" fill="#00FF00"/>
<rect x="137" y="478" width="1" height="52" fill="#FF0000"/>
<rect x="136" y="478" width="3" height="8" fill="#FF0000"/>
<rect x="141" y="467" width="1" height="50" fill="#FF0000"/>
<rect x="140" y="469" width="3" height="43" fill="#FF0000"/>
<rect x="145" y="473" width="1" height="44" fill="#FF0000"/>
<rect x="144" y="484" width="3" height="4" fill="#FF0000"/>
<rect x="149" y="462" width="1" height="50" fill="#FF0000"/>
<rect x="148" y="505" width="3" height="7" fill="#FF0000"/>
<rect x="153" y="459" width="1" height="40" fill="#FF0000"/>
<rect x="152" y="463" width="3" height="1" fill="#FF0000"/>
<rect x="157" y="451" width="1" height="47" fill="#00FF00"/>
<rect x="156" y="459" width="3" height="32" fill="#00FF00"/>
<rect x="161" y="439" width="1" height="39" fill="#00FF00"/>
<rect x="160" y="444" width="3" height="15" fill="#00FF00"/>
<rect x="165" y="442" width="1" height="46" fill="#FF0000"/>
<rect x="164" y="466" width="3" height="21" fill="#FF0000"/>
<rect x="169" y="441" width="1" height="25" fill="#FF0000"/>
<rect x="168" y="448" width="3" height="3" fill="#FF0000"/>
<rect x="173" y="420" width="1" height="36" fill="#FF0000"/>
<rect x="172" y="440" width="3" height="9" fill="#FF0000"/>
<rect x="177" y="416" width="1" height="42" fill="#FF0000"/>
<rect x="176" y="450" width="3" height="7" fill="#FF0000"/>
<rect x="181" y="420" width="1" height="21" fill="#00FF00"/>
<rect x="180" y="436" width="3" height="2" fill="#00FF00"/>
<rect x="185" y="411" width="1" height="35" fill="#00FF00"/>
<rect x="184" y="412" width="3" height="11" fill="#00FF00"/>
<rect x="189" y="410" width="1" height="41" fill="#FF0000"/>
<rect x="188" y="420" width="3" height="18" fill="#FF0000"/>
<rect x="193" y="426" width="1" height="22" fill="#FF0000"/>
<rect x="192" y="447" width="3" height="1" fill="#FF0000"/>
<rect x="197" y="427" width="1" height="22" fill="#FF0000"/>
<rect x="196" y="432" width="3" height="1" fill="#FF0000"/>
<rect x="201" y="416" width="1" height="35" fill="#FF0000"/>
<rect x="200" y="438" width="3" height="10" fill="#FF0000"/>
<rect x="205" y="421" width="1" height="24" fill="#FF0000"/>
<rect x="204" y="437" width="3" height="3" fill="#FF0000"/>
<rect x="209" y="404" width="1" height="35" fill="#00FF00"/>
<rect x="208" y="432" width="3" height="4" fill="#00FF00"/>
<rect x="213" y="411" width="1" height="29" fill="#FF0000"/>
<rect x="212" y="416" width="3" height="18" fill="#FF0000"/>
<rect x="217" y="399" width="1" height="33" fill="#00FF00"/>
<rect x="216" y="412" width="3" height="19" fill="#00FF00"/>
<rect x="221" y="395" width="1" height="30" fill="#00FF00"/>
<rect x="220" y="400" width="3" height="17" fill="#00FF00"/>
<rect x="225" y="384" width="1" height="55" fill="#00FF00"/>
<rect x="224" y="429" width="3" height="5" fill="#00FF00"/>
<rect x="229" y="380" width="1" height="42" fill="#00FF00"/>
<rect x="228" y="407" width="3" height="14" fill="#00FF00"/>
<rect x="233" y="378" width="1" height="47" fill="#00FF00"/>
<rect x="232" y="379" width="3" height="6" fill="#00FF00"/>
<rect x="237" y="389" width="1" height="32" fill="#FF0000"/>
<rect x="236" y="405" width="3" height="13" fill="#FF0000"/>
<rect x="241" y="369" width="1" height="43" fill="#00FF00"/>
<rect x="240" y="378" width="3" height="26" fill="#00FF00"/>
<rect x="245" y="357" width="1" height="68" fill="#FF0000"/>
<rect x="244" y="374" width="3" height="24" fill="#FF0000"/>
<rect x="249" y="351" width="1" height="68" fill="#FF0000"/>
<rect x="248" y="360" width="3" height="53" fill="#FF0000"/>
<rect x="253" y="348" width="1" height="68" fill="#FF0000"/>
<rect x="252" y="388" width="3" height="22" fill="#FF0000"/>
<rect x="257" y="345" width="1" height="53" fill="#FF0000"/>
<rect x="256" y="371" width="3" height="2" fill="#FF0000"/>
<rect x="261" y="348" width="1" height="80" fill="#00FF00"/>
<rect x="260" y="363" width="3" height="20" fill="#00FF00"/>
<rect x="265" y="330" width="1" height="69" fill="#FF0000"/>
<rect x="264" y="342" width="3" height="21" fill="#FF0000"/>
<rect x="269" y="354" width="1" height="52" fill="#FF0000"/>
<rect x="268" y="371" width="3" height="10" fill="#FF0000"/>
<rect x="273" y="348" width="1" height="49" fill="#FF0000"/>
<rect x="272" y="353" width="3" height="22" fill="#FF0000"/>
<rect x="277" y="338" width="1" height="75" fill="#00FF00"/>
<rect x="276" y="376" width="3" height="20" fill="#00FF00"/>
<rect x="281" y="344" width="1" height="48" fill="#00FF00"/>
<rect x="280" y="366" width="3" height="22" fill="#00FF00"/>
<rect x="285" y="333" width="1" height="52" fill="#FF0000"/>
<rect x="284" y="360" width="3" height="9" fill="#FF0000"/>
<rect x="289" y="316" width="1" height="53" fill="#FF0000"/>
<rect x="288" y="341" width="3" height="25" fill="#FF0000"/>
<rect x="293" y="310" width="1" height="35" fill="#00FF00"/>
<rect x="292" y="319" width="3" height="24" fill="#00FF00"/>
<rect x="297" y="293" width="1" height="35" fill="#00FF00"/>
<rect x="296" y="298" width="3" height="24" fill="#00FF00"/>
<rect x="301" y="272" width="1" height="56" fill="#FF0000"/>
<rect x="300" y="276" width="3" height="9" fill="#FF0000"/>
<rect x="305" y="268" width="1" height="49" fill="#FF0000"/>
<rect x="304" y="306" width="3" height="6" fill="#FF0000"/>
<rect x="309" y="267" width="1" height="44" fill="#00FF00"/>
<rect x="308" y="273" width="3" height="23" fill="#00FF00"/>
<rect x="313" y="279" width="1" height="21" fill="#FF0000"/>
<rect x="312" y="284" width="3" height="16" fill="#FF0000"/>
<rect x="317" y="265" width="1" height="40" fill="#00FF00"/>
<rect x="316" y="298" width="3" height="6" fill="#00FF00"/>
<rect x="321" y="259" width="1" height="44" fill="#00FF00"/>
<rect x="320" y="273" width="3" height="8" fill="#00FF00"/>
<rect x="325" y="261" width="1" height="45" fill="#00FF00"/>
<rect x="324" y="262" width="3" height="32" fill="#00FF00"/>
<rect x="329" y="270" width="1" height="36" fill="#FF0000"/>
<rect x="328" y="271" width="3" height="11" fill="#FF0000"/>
<rect x="333" y="274" width="1" height="33" fill="#FF0000"/>
<rect x="332" y="276" width="3" height="31" fill="#FF0000"/>
<rect x="337" y="279" width="1" height="21" fill="#FF0000"/>
<rect x="336" y="281" width="3" height="3" fill="#FF0000"/>
<rect x="341" y="267" width="1" height="40" fill="#00FF00"/>
<rect x="340" y="272" width="3" height="6" fill="#00FF00"/>
<rect x="345" y="280" width="1" height="34" fill="#00FF00"/>
<rect x="344" y="289" width="3" height="19" fill="#00FF00"/>
<rect x="349" y="279" width="1" height="44" fill="#FF0000"/>
<rect x="348" y="304" width="3" height="6" fill="#FF0000"/>
<rect x="353" y="283" width="1" height="72" fill="#00FF00"/>
<rect x="352" y="314" width="3" height="19" fill="#00FF00"/>
<rect x="357" y="287" width="1" height="54" fill="#FF0000"/>
<rect x="356" y="321" width="3" height="9" fill="#FF0000"/>
<rect x="361" y="277" width="1" height="52" fill="#FF0000"/>
<rect x="360" y="281" width="3" height="42" fill="#FF0000"/>
<rect x="365" y="277" width="1" height="53" fill="#FF0000"/>
<rect x="364" y="306" width="3" height="20" fill="#FF0000"/>
<rect x="369" y="261" width="1" height="58" fill="#00FF00"/>
<rect x="368" y="275" width="3" height="17" fill="#00FF00"/>
<rect x="373" y="247" width="1" height="57" fill="#FF0000"/>
<rect x="372" y="250" width="3" height="9" fill="#FF0000"/>
<rect x="377" y="242" width="1" height="48" fill="#00FF00"/>
<rect x="376" y="256" width="3" height="23" fill="#00FF00"/>
<rect x="381" y="237" width="1" height="49" fill="#00FF00"/>
<rect x="380" y="238" width="3" height="16" fill="#00FF00"/>
<rect x="385" y="223" width="1" height="60" fill="#00FF00"/>
<rect x="384" y="256" width="3" height="11" fill="#00FF00"/>
<rect x="389" y="212" width="1" height="53" fill="#00FF00"/>
<rect x="388" y="218" width="3" height="44" fill="#00FF00"/>
<rect x="393" y="232" width="1" height="43" fill="#FF0000"/>
<rect x="392" y="253" width="3" height="15" fill="#FF0000"/>
<rect x="397" y="228" width="1" height="59" fill="#FF0000"/>
<rect x="396" y="269" width="3" height="17" fill="#FF0000"/>
<rect x="401" y="234" width="1" height="57" fill="#00FF00"/>
<rect x="400" y="270" width="3" height="4" fill="#00FF00"/>
<rect x="405" y="244" width="1" height="78" fill="#FF0000"/>
<rect x="404" y="248" width="3" height="6" fill="#FF0000"/>
<rect x="409" y="238" width="1" height="82" fill="#00FF00"/>
<rect x="408" y="252" width="3" height="8" fill="#00FF00"/>
<rect x="413" y="240" width="1" height="79" fill="#00FF00"/>
<rect x="412" y="293" width="3" height="16" fill="#00FF00"/>
<rect x="417" y="232" width="1" height="79" fill="#FF0000"/>
<rect x="416" y="255" width="3" height="13" fill="#FF0000"/>
<rect x="421" y="213" width="1" height="60" fill="#FF0000"/>
<rect x="420" y="229" width="3" height="42" fill="#FF0000"/>
<rect x="425" y="214" width="1" height="26" fill="#FF0000"/>
<rect x="424" y="220" width="3" height="19" fill="#FF0000"/>
<rect x="429" y="198" width="1" height="43" fill="#FF0000"/>
<rect x="428" y="198" width="3" height="16" fill="#FF0000"/>
<rect x="433" y="199" width="1" height="38" fill="#FF0000"/>
<rect x="432" y="207" width="3" height="12" fill="#FF0000"/>
<rect x="437" y="187" width="1" height="53" fill="#FF0000"/>
<rect x="436" y="192" width="3" height="17" fill="#FF0000"/>
<rect x="441" y="180" width="1" height="59" fill="#00FF00"/>
<rect x="440" y="194" width="3" height="4" fill="#00FF00"/>
<rect x="445" y="170" width="1" height="37" fill="#00FF00"/>
<rect x="444" y="194" width="3" height="3" fill="#00FF00"/>
<rect x="449" y="151" width="1" height="27" fill="#00FF00"/>
<rect x="448" y="159" width="3" height="2" fill="#00FF00"/>
<rect x="453" y="145" width="1" height="38" fill="#00FF00"/>
<rect x="452" y="170" width="3" height="3" fill="#00FF00"/>
<rect x="457" y="116" width="1" height="46" fill="#00FF00"/>
<rect x="456" y="145" width="3" height="12" fill="#00FF00"/>
<rect x="461" y="125" width="1" height="32" fill="#FF0000"/>
<rect x="460" y="129" width="3" height="12" fill="#FF0000"/>
<rect x="465" y="114" width="1" height="37" fill="#FF0000"/>
<rect x="464" y="144" width="3" height="1" fill="#FF0000"/>
<rect x="469" y="112" width="1" height="33" fill="#FF0000"/>
<rect x="468" y="134" width="3" height="1" fill="#FF0000"/>
<rect x="473" y="99" width="1" height="60" fill="#FF0000"/>
<rect x="472" y="107" width="3" height="14" fill="#FF0000"/>
<rect x="477" y="102" width="1" height="87" fill="#FF0000"/>
<rect x="476" y="151" width="3" height="6" fill="#FF0000"/>
<rect x="481" y="144" width="1" height="92" fill="#00FF00"/>
<rect x="480" y="144" width="3" height="45" fill="#00FF00"/>
<rect x="485" y="173" width="1" height="64" fill="#FF0000"/>
<rect x="484" y="205" width="3" height="2" fill="#FF0000"/>
<rect x="489" y="185" width="1" height="82" fill="#00FF00"/>
<rect x="488" y="206" width="3" height="40" fill="#00FF00"/>
<rect x="493" y="189" width="1" height="71" fill="#00FF00"/>
<rect x="492" y="203" width="3" height="37" fill="#00FF00"/>
<rect x="497" y="217" width="1" height="25" fill="#00FF00"/>
<rect x="496" y="226" width="3" height="3" fill="#00FF00"/>
<rect x="501" y="212" width="1" height="34" fill="#00FF00"/>
<rect x="500" y="232" width="3" height="5" fill="#00FF00"/>
<rect x="505" y="215" width="1" height="39" fill="#FF0000"/>
<rect x="504" y="221" width="3" height="4" fill="#FF0000"/>
<rect x="509" y="217" width="1" height="29" fill="#00FF00"/>
<rect x="508" y="217" width="3" height="16" fill="#00FF00"/>
<rect x="513" y="207" width="1" height="40" fill="#FF0000"/>
<rect x="512" y="235" width="3" height="1" fill="#FF0000"/>
<rect x="517" y="220" width="1" height="31" fill="#00FF00"/>
<rect x="516" y="234" width="3" height="2" fill="#00FF00"/>
<rect x="521" y="218" width="1" height="38" fill="#00FF00"/>
<rect x="520" y="226" width="3" height="26" fill="#00FF00"/>
<rect x="525" y="229" width="1" height="16" fill="#FF0000"/>
<rect x="524" y="229" width="3" height="7" fill="#FF0000"/>
<rect x="529" y="229" width="1" height="19" fill="#00FF00"/>
<rect x="528" y="234" width="3" height="3" fill="#00FF00"/>
<rect x="533" y="222" width="1" height="30" fill="#FF0000"/>
<rect x="532" y="229" width="3" height="11" fill="#FF0000"/>
<rect x="537" y="226" width="1" height="38" fill="#00FF00"/>
<rect x="536" y="231" width="3" height="31" fill="#00FF00"/>
<rect x="541" y="243" width="1" height="27" fill="#00FF00"/>
<rect x="540" y="262" width="3" height="5" fill="#00FF00"/>
<rect x="545" y="238" width="1" height="30" fill="#00FF00"/>
<rect x="544" y="239" width="3" height="14" fill="#00FF00"/>
<rect x="549" y="239" width="1" height="41" fill="#00FF00"/>
<rect x="548" y="251" width="3" height="6" fill="#00FF00"/>
<rect x="553" y="252" width="1" height="45" fill="#FF0000"/>
<rect x="552" y="266" width="3" height="24" fill="#FF0000"/>
<rect x="557" y="261" width="1" height="45" fill="#00FF00"/>
<rect x="556" y="266" width="3" height="32" fill="#00FF00"/>
<rect x="561" y="295" width="1" height="28" fill="#00FF00"/>
<rect x="560" y="303" width="3" height="17" fill="#00FF00"/>
<rect x="565" y="294" width="1" height="53" fill="#00FF00"/>
<rect x="564" y="326" width="3" height="22" fill="#00FF00"/>
<rect x="569" y="307" width="1" height="57" fill="#00FF00"/>
<rect x="568" y="310" width="3" height="13" fill="#00FF00"/>
<rect x="573" y="307" width="1" height="55" fill="#FF0000"/>
<rect x="572" y="323" width="3" height="36" fill="#FF0000"/>
<rect x="577" y="318" width="1" height="68" fill="#00FF00"/>
<rect x="576" y="331" width="3" height="22" fill="#00FF00"/>
<rect x="581" y="328" width="1" height="46" fill="#00FF00"/>
<rect x="580" y="365" width="3" height="3" fill="#00FF00"/>
<rect x="585" y="342" width="1" height="40" fill="#00FF00"/>
<rect x="584" y="364" width="3" height="16" fill="#00FF00"/>
<rect x="589" y="351" width="1" height="65" fill="#00FF00"/>
<rect x="588" y="381" width="3" height="18" fill="#00FF00"/>
<rect x="593" y="362" width="1" height="43" fill="#00FF00"/>
<rect x="592" y="364" width="3" height="10" fill="#00FF00"/>
<rect x="597" y="378" width="1" height="48" fill="#00FF00"/>
<rect x="596" y="394" width="3" height="6" fill="#00FF00"/>
<rect x="601" y="374" width="1" height="43" fill="#00FF00"/>
<rect x="600" y="385" width="3" height="31" fill="#00FF00"/>
<rect x="605" y="394" width="1" height="40" fill="#00FF00"/>
<rect x="604" y="410" width="3" height="7" fill="#00FF00"/>
<rect x="609" y="381" width="1" height="53" fill="#FF0000"/>
<rect x="608" y="392" width="3" height="37" fill="#FF0000"/>
<rect x="613" y="385" width="1" height="45" fill="#FF0000"/>
<rect x="612" y="426" width="3" height="4" fill="#FF0000"/>
<rect x="617" y="381" width="1" height="48" fill="#00FF00"/>
<rect x="616" y="386" width="3" height="5" fill="#00FF00"/>
<rect x="621" y="376" width="1" height="51" fill="#FF0000"/>
<rect x="620" y="388" width="3" height="1" fill="#FF0000"/>
<rect x="625" y="374" width="1" height="29" fill="#00FF00"/>
<rect x="624" y="386" width="3" height="10" fill="#00FF00"/>
<rect x="629" y="365" width="1" height="39" fill="#00FF00"/>
<rect x="628" y="378" width="3" height="1" fill="#00FF00"/>
<rect x="633" y="352" width="1" height="49" fill="#00FF00"/>
<rect x="632" y="358" width="3" height="42" fill="#00FF00"/>
<rect x="637" y="355" width="1" height="33" fill="#00FF00"/>
<rect x="636" y="362" width="3" height="21" fill="#00FF00"/>
<g shape-rendering="auto" stroke-linecap="butt">
<line x1="470" y1="260" x2="830" y2="676" stroke="#0000FF" stroke-width="1"/>
<line x1="481" y1="303" x2="801" y2="676" stroke="#0000FF" stroke-width="1"/>
<line x1="540" y1="316" x2="700" y2="520" stroke="#0000FF" stroke-width="1"/>
<line x1="540" y1="345" x2="640" y2="500" stroke="#0000FF" stroke-width="1"/>
<line x1="540" y1="366" x2="630" y2="500" stroke="#0000FF" stroke-width="1"/>
<line x1="487" y1="263" x2="620" y2="440" stroke="#0000FF" stroke-width="1"/>
<line x1="660" y1="520" x2="790" y2="676" stroke="#0000FF" stroke-width="1"/>
<line x1="453" y1="98" x2="640" y2="440" stroke="#FF00FF" stroke-width="1"/>
<line x1="473" y1="180" x2="700" y2="560" stroke="#FF00FF" stroke-width="1"/>
<line x1="487" y1="180" x2="790" y2="676" stroke="#FF00FF" stroke-width="1"/>
<line x1="500" y1="160" x2="780" y2="676" stroke="#FF00FF" stroke-width="1"/>
<line x1="520" y1="180" x2="670" y2="430" stroke="#FF00FF" stroke-width="1"/>
<polyline points="240,460 248,452 358,369 453.5,124" fill="none" stroke="#0000FF" stroke-width="3"/>
<polyline points="482,276 500,207 512,190" fill="none" stroke="#0000FF" stroke-width="2.5"/>
<polyline points="605,432 614,356 638,315.5" fill="none" stroke="#0000FF" stroke-width="3"/>
<line x1="636.5" y1="315" x2="636.5" y2="400" stroke="#0000FF" stroke-width="1"/>
<polyline points="200,530 270,440" fill="none" stroke="#0000FF" stroke-width="2"/>
<polyline points="21,677 473,94" fill="none" stroke="#0000FF" stroke-width="5"/>
<polyline points="473,94 640,485" fill="none" stroke="#FF00FF" stroke-width="5"/>
<polyline points="454,124 466,174 480,278" fill="none" stroke="#FF00FF" stroke-width="4"/>
<polyline points="500,203 537.7,290 553.5,340 590,420 615,470" fill="none" stroke="#FF00FF" stroke-width="3.5"/>
<polyline points="5,665 28,580" fill="none" stroke="#0000FF" stroke-width="3"/>
<polyline points="28,580 53,647" fill="none" stroke="#FF00FF" stroke-width="3"/>
<polyline points="209,448 257,330" fill="none" stroke="#0000FF" stroke-width="3"/>
<polyline points="182,405 186,450" fill="none" stroke="#FF00FF" stroke-width="2"/>
<polyline points="257,328 262,445" fill="none" stroke="#FF00FF" stroke-width="3"/>
<path d="M458.5,186.8 L605,432 L624.6,349 M606,363 L624.6,349 L632.4,371" fill="none" stroke="#8080F0" stroke-width="4.5" stroke-linecap="round" stroke-linejoin="round"/>
</g>
<rect x="620.5" y="302.5" width="34" height="43" fill="none" stroke="#00FFFF" stroke-width="1"/>
<path d="M632,312 h8 v12 h5 l-9,10 -9,-10 h5z" fill="none" stroke="#00FFFF"/>
<line x1="609" y1="313.5" x2="639" y2="313.5" stroke="#FF00FF" stroke-width="2"/>
<line x1="609" y1="340.5" x2="639" y2="340.5" stroke="#FF00FF" stroke-width="2"/>
<g shape-rendering="auto">
<circle cx="451" cy="234" r="7.2" fill="#FF0000"/>
<circle cx="452" cy="244" r="7.2" fill="#FFA500"/>
<circle cx="452.5" cy="256" r="7.2" fill="#FF0000"/>
<circle cx="316.8" cy="298" r="7.2" fill="#FFFF00"/>
<circle cx="316.8" cy="308" r="7.2" fill="#FFFF00"/>
<circle cx="322.6" cy="318" r="7.2" fill="#FF0000"/>
<circle cx="330" cy="333" r="7.2" fill="#FFA500"/>
<circle cx="332" cy="351" r="7.2" fill="#FF0000"/>
<circle cx="283.6" cy="357" r="7.2" fill="#FFFF00"/>
<circle cx="299" cy="353" r="7.2" fill="#FFFF00"/>
<circle cx="294" cy="347" r="7.2" fill="#FFFF00"/>
<circle cx="356" cy="387" r="7.2" fill="#FFFF00"/>
<circle cx="356" cy="399" r="7.2" fill="#FFFF00"/>
<circle cx="236.6" cy="399.5" r="7.2" fill="#FFFF00"/>
<circle cx="252" cy="409" r="7.2" fill="#FF0000"/>
<circle cx="242.5" cy="415" r="7.2" fill="#FFA500"/>
<circle cx="256" cy="417" r="7.2" fill="#FFA500"/>
<circle cx="240.5" cy="428.8" r="7.2" fill="#FF0000"/>
<circle cx="256" cy="434.7" r="7.2" fill="#FFA500"/>
<circle cx="225" cy="442.5" r="7.2" fill="#FFFF00"/>
<circle cx="382.7" cy="263" r="7.2" fill="#FF0000"/>
<circle cx="392" cy="264.4" r="7.2" fill="#FFFF00"/>
<circle cx="409" cy="271" r="7.2" fill="#FF0000"/>
<circle cx="413" cy="283" r="7.2" fill="#FFFF00"/>
<circle cx="399.8" cy="282" r="7.2" fill="#FFA500"/>
<circle cx="415" cy="289" r="7.2" fill="#FFA500"/>
<circle cx="415" cy="295" r="7.2" fill="#FFA500"/>
<circle cx="428.6" cy="255.6" r="7.2" fill="#FF0000"/>
<circle cx="428.6" cy="261" r="7.2" fill="#FFA500"/>
<circle cx="432.5" cy="268.3" r="7.2" fill="#FFFF00"/>
<circle cx="508.4" cy="260" r="7.2" fill="#FFA500"/>
<circle cx="486" cy="281.6" r="7.2" fill="#FFA500"/>
<circle cx="488" cy="287.4" r="7.2" fill="#FFFF00"/>
<circle cx="492.7" cy="293.3" r="7.2" fill="#FF0000"/>
<circle cx="524" cy="279.6" r="7.2" fill="#FFFF00"/>
<circle cx="525" cy="285.5" r="7.2" fill="#FF0000"/>
<circle cx="525" cy="293.3" r="7.2" fill="#FFA500"/>
<circle cx="535.7" cy="299" r="7.2" fill="#FFFF00"/>
<circle cx="541.6" cy="307" r="7.2" fill="#FF0000"/>
<circle cx="528.9" cy="318.7" r="7.2" fill="#FFA500"/>
<circle cx="644" cy="380" r="7.2" fill="#FF0000"/>
<circle cx="644" cy="387" r="7.2" fill="#FFFF00"/>
<circle cx="600" cy="410" r="7.2" fill="#FF0000"/>
<circle cx="619.4" cy="450.6" r="7.2" fill="#FFFF00"/>
<circle cx="631" cy="436" r="7.2" fill="#FF0000"/>
<circle cx="634" cy="446" r="7.2" fill="#FF0000"/>
<circle cx="637.7" cy="459.7" r="7.2" fill="#FF0000"/>
<circle cx="28" cy="618.6" r="7.2" fill="#FFA500"/>
<circle cx="36.3" cy="640.9" r="7.2" fill="#FFFF00"/>
<circle cx="58.6" cy="651.4" r="7.2" fill="#FFA500"/>
<circle cx="68" cy="651.4" r="7.2" fill="#FFA500"/>
<circle cx="43.4" cy="663" r="7.2" fill="#FFA500"/>
<circle cx="80.9" cy="639.7" r="7.2" fill="#FFA500"/>
<circle cx="140.6" cy="597.5" r="7.2" fill="#FFA500"/>
<circle cx="155.8" cy="601" r="7.2" fill="#FFFF00"/>
<circle cx="155.8" cy="618.6" r="7.2" fill="#FFA500"/>
<circle cx="155.8" cy="626.8" r="7.2" fill="#FF0000"/>
<path d="M349,393 l3,-2 v4z M363,393 l-3,-2 v4z" fill="#FF0000"/>
<text x="452" y="247.5" fill="#000" font-size="10.5" text-anchor="middle">0</text>
<text x="322.6" y="321.5" fill="#000" font-size="10.5" text-anchor="middle">0</text>
<text x="332" y="354.5" fill="#000" font-size="10.5" text-anchor="middle">0</text>
<text x="356" y="390.5" fill="#000" font-size="10.5" text-anchor="middle">1</text>
<text x="356" y="402.5" fill="#000" font-size="10.5" text-anchor="middle">1</text>
<text x="240.5" y="432.3" fill="#000" font-size="10.5" text-anchor="middle">5</text>
<text x="225" y="446.0" fill="#000" font-size="10.5" text-anchor="middle">6</text>
<text x="382.7" y="266.5" fill="#000" font-size="10.5" text-anchor="middle">4</text>
<text x="392" y="267.9" fill="#000" font-size="10.5" text-anchor="middle">6</text>
<text x="399.8" y="285.5" fill="#000" font-size="10.5" text-anchor="middle">6</text>
<text x="415" y="298.5" fill="#000" font-size="10.5" text-anchor="middle">7</text>
<text x="432.5" y="271.8" fill="#000" font-size="10.5" text-anchor="middle">3</text>
<text x="508.4" y="263.5" fill="#000" font-size="10.5" text-anchor="middle">2</text>
<text x="644" y="390.5" fill="#000" font-size="10.5" text-anchor="middle">1</text>
<text x="619.4" y="454.1" fill="#000" font-size="10.5" text-anchor="middle">5</text>
<text x="28" y="622.1" fill="#000" font-size="10.5" text-anchor="middle">3</text>
<text x="36.3" y="644.4" fill="#000" font-size="10.5" text-anchor="middle">3</text>
<text x="58.6" y="654.9" fill="#000" font-size="10.5" text-anchor="middle">8</text>
<text x="43.4" y="666.5" fill="#000" font-size="10.5" text-anchor="middle">4</text>
<text x="80.9" y="643.2" fill="#000" font-size="10.5" text-anchor="middle">5</text>
<text x="140.6" y="601.0" fill="#000" font-size="10.5" text-anchor="middle">4</text>
</g>
<text x="30" y="92.2" fill="#FF00FF" font-size="9.5" textLength="192" lengthAdjust="spacingAndGlyphs">### Basic Entry Alert (H1 SBZ) ### &gt; SHORT</text>
<text x="16" y="102.7" fill="#FF00FF" font-size="9.5" textLength="266" lengthAdjust="spacingAndGlyphs">Recent Alert : 00:01:32 ago; Trader Analysed Decision (TAD) ==</text>
<text x="16" y="113.1" fill="#FFFFFF" font-size="9.5" textLength="176" lengthAdjust="spacingAndGlyphs">Using Observed PA H1 SBZ Size : 20 pips</text>
<text x="36" y="123.5" fill="#00FFFF" font-size="9.5" textLength="212" lengthAdjust="spacingAndGlyphs">$$$ PA Related MM &amp; SL + Spread = SBZ Size $$$</text>
<text x="16" y="134.0" fill="#00FFFF" font-size="9.5" textLength="125" lengthAdjust="spacingAndGlyphs">Capital Base Currency &gt; USD</text>
<text x="183" y="134.0" fill="#00FFFF" font-size="9.5" textLength="194" lengthAdjust="spacingAndGlyphs"># Lot(s)/Trade &gt; 1 lot(s), 5000 size, $25 margin</text>
<text x="16" y="144.4" fill="#00FFFF" font-size="9.5" textLength="95" lengthAdjust="spacingAndGlyphs">Lot Size Per Lot &gt; 5000</text>
<text x="183" y="144.4" fill="#00FFFF" font-size="9.5" textLength="263" lengthAdjust="spacingAndGlyphs"># $-based R:R, SL(w Spread):TP/Trade &gt; 1:2.00, $12.71:$25.41</text>
<text x="16" y="154.9" fill="#00FFFF" font-size="9.5" textLength="82" lengthAdjust="spacingAndGlyphs">Leverage &gt; 1 to 200</text>
<text x="183" y="154.9" fill="#00FFFF" font-size="9.5" textLength="203" lengthAdjust="spacingAndGlyphs"># Pip-based SL(w Spread)/Trade &gt; 16+4 = 20 pips</text>
<text x="16" y="165.3" fill="#00FFFF" font-size="9.5" textLength="153" lengthAdjust="spacingAndGlyphs">Trader Wants : $-based R:R &gt; 1:2.00</text>
<text x="183" y="165.3" fill="#00FFFF" font-size="9.5" textLength="262" lengthAdjust="spacingAndGlyphs"># Pip-based R:R, SL(wo Spread):TP/Trade &gt; 1:2.50, 16:40 pips</text>
<text x="16" y="175.8" fill="#00FFFF" font-size="9.5" textLength="113" lengthAdjust="spacingAndGlyphs">Auto SL : SBZ-Spread &gt; On</text>
<text x="183" y="175.8" fill="#00FFFF" font-size="9.5" textLength="253" lengthAdjust="spacingAndGlyphs"># Pip-based Required Wave Length to Catch/Trade &gt; 50 pips</text>
<text x="30" y="186.2" fill="#FFFFFF" font-size="9.5" textLength="116" lengthAdjust="spacingAndGlyphs">### Additional Variables ###</text>
<text x="16" y="196.7" fill="#FF00FF" font-size="9.5" textLength="203" lengthAdjust="spacingAndGlyphs">* H1 SBZ * &gt; : 12 pips broken downside, SHORT</text>
<text x="16" y="207.1" fill="#FF00FF" font-size="9.5" textLength="203" lengthAdjust="spacingAndGlyphs">* H5 SBZ * &gt; : 12 pips broken downside, SHORT</text>
<text x="16" y="284" fill="#9A9A9A" font-size="9.5" textLength="214" lengthAdjust="spacingAndGlyphs">* Stop Hunt Psych Zone * &gt; OUTSIDE Zone; WAIT</text>
<text x="18" y="294.5" fill="#8080FF" font-size="9.5" textLength="40" lengthAdjust="spacingAndGlyphs">- - - - - - -</text>
<text x="59" y="294.5" fill="#FFFFFF" font-size="9.5" textLength="227" lengthAdjust="spacingAndGlyphs">&gt; Nearest Major Psych Zone : 1.0400 &gt; 44.0 pips away</text>
<text x="16" y="305" fill="#FFFFFF" font-size="9.5" textLength="194" lengthAdjust="spacingAndGlyphs">Using Observed Psych Zone Size 20 + 20 pips</text>
<text x="218" y="305" fill="#9A9A9A" font-size="9.5" textLength="80" lengthAdjust="spacingAndGlyphs">Wait for Big Player</text>
<text x="16" y="323" fill="#00FF00" font-size="9.5" textLength="203" lengthAdjust="spacingAndGlyphs">* CC-M5x12=M60 H1 on W1 * &gt; Up Wave; +48.0</text>
<text x="16" y="333.2" fill="#00FF00" font-size="9.5" textLength="214" lengthAdjust="spacingAndGlyphs">* CC-M30x10=M300 H5 on MN1 * &gt; Up Wave; +7.0</text>
<text x="16" y="343.7" fill="#FF0000" font-size="9.5" textLength="240" lengthAdjust="spacingAndGlyphs">* CC-M60x24=M1440 D1 on YR1 * &gt; Down Wave; -251.5</text>
<text x="16" y="354" fill="#00FF00" font-size="9.5" textLength="240" lengthAdjust="spacingAndGlyphs">* CC-M1440x5=M7200 W1 on YR0 * &gt; Up Wave; +382.0</text>
<text x="274" y="323" fill="#FFFFFF" font-size="9.5" textLength="72" lengthAdjust="spacingAndGlyphs">CandleLoad : OK</text>
<text x="274" y="333.2" fill="#FFFFFF" font-size="9.5" textLength="72" lengthAdjust="spacingAndGlyphs">CandleLoad : OK</text>
<text x="274" y="343.7" fill="#FFFFFF" font-size="9.5" textLength="72" lengthAdjust="spacingAndGlyphs">CandleLoad : OK</text>
<text x="274" y="354" fill="#FFFFFF" font-size="9.5" textLength="72" lengthAdjust="spacingAndGlyphs">CandleLoad : OK</text>
<text x="25" y="375.7" fill="#FFFFFF" font-size="8.2" font-weight="bold" textLength="171" lengthAdjust="spacingAndGlyphs">*S8 WA Impulse Freq Dist* last 14.0 trading days</text>
<text x="16" y="385" fill="#FFA500" font-size="8.2" font-weight="bold" textLength="114" lengthAdjust="spacingAndGlyphs">Impulse Wave; Outer Factor : 80%</text>
<text x="135" y="385" fill="#008B8B" font-size="8.2" font-weight="bold" textLength="146" lengthAdjust="spacingAndGlyphs">Correction Wave; General Mkt Factor : 50%</text>
<text x="16" y="392.5" fill="#FFFFFF" font-size="8.5" font-weight="bold" textLength="16" lengthAdjust="spacingAndGlyphs">WAT</text>
<text x="48" y="392.5" fill="#FFFFFF" font-size="8.5" font-weight="bold" textLength="15" lengthAdjust="spacingAndGlyphs">M3n</text>
<text x="99" y="392.5" fill="#FFFFFF" font-size="8.5" font-weight="bold" textLength="20" lengthAdjust="spacingAndGlyphs">M15n</text>
<text x="148" y="392.5" fill="#FFFFFF" font-size="8.5" font-weight="bold" textLength="20" lengthAdjust="spacingAndGlyphs">M60n</text>
<text x="15" y="403.0" fill="#FFFFFF" font-size="7.8" font-weight="bold" textLength="13.2" lengthAdjust="spacingAndGlyphs">0-5:</text>
<text x="48" y="403.0" fill="#FFFFFF" font-size="7.8" font-weight="bold" textLength="36.5" lengthAdjust="spacingAndGlyphs">178 / 10.8%</text>
<text x="99" y="403.0" fill="#FFFFFF" font-size="7.8" font-weight="bold" textLength="25.9" lengthAdjust="spacingAndGlyphs">7 / 1.4%</text>
<text x="147.5" y="403.0" fill="#FFFFFF" font-size="7.8" font-weight="bold" textLength="25.9" lengthAdjust="spacingAndGlyphs">1 / 0.8%</text>
<text x="15" y="412.0" fill="#FFFFFF" font-size="7.8" font-weight="bold" textLength="16.5" lengthAdjust="spacingAndGlyphs">6-10:</text>
<text x="48" y="412.0" fill="#00FFFF" font-size="7.8" font-weight="bold" textLength="37.2" lengthAdjust="spacingAndGlyphs">546 / 33.2%</text>
<text x="99" y="412.0" fill="#FFFFFF" font-size="7.8" font-weight="bold" textLength="29.9" lengthAdjust="spacingAndGlyphs">43 / 8.4%</text>
<text x="147.5" y="412.0" fill="#FFFFFF" font-size="7.8" font-weight="bold" textLength="26.2" lengthAdjust="spacingAndGlyphs">0 / 0.0%</text>
<text x="15" y="421.0" fill="#FFFFFF" font-size="7.8" font-weight="bold" textLength="19.4" lengthAdjust="spacingAndGlyphs">11-15:</text>
<text x="48" y="421.0" fill="#008B8B" font-size="7.8" font-weight="bold" textLength="36.9" lengthAdjust="spacingAndGlyphs">401 / 24.4%</text>
<text x="99" y="421.0" fill="#FFFFFF" font-size="7.8" font-weight="bold" textLength="33.2" lengthAdjust="spacingAndGlyphs">78 / 15.2%</text>
<text x="147.5" y="421.0" fill="#FFFFFF" font-size="7.8" font-weight="bold" textLength="25.9" lengthAdjust="spacingAndGlyphs">1 / 0.8%</text>
<text x="15" y="430.0" fill="#FFFFFF" font-size="7.8" font-weight="bold" textLength="20.1" lengthAdjust="spacingAndGlyphs">16-20:</text>
<text x="48" y="430.0" fill="#FFA500" font-size="7.8" font-weight="bold" textLength="36.9" lengthAdjust="spacingAndGlyphs">236 / 14.3%</text>
<text x="99" y="430.0" fill="#00FFFF" font-size="7.8" font-weight="bold" textLength="33.2" lengthAdjust="spacingAndGlyphs">90 / 17.5%</text>
<text x="147.5" y="430.0" fill="#FFFFFF" font-size="7.8" font-weight="bold" textLength="25.9" lengthAdjust="spacingAndGlyphs">2 / 1.5%</text>
<text x="15" y="439.0" fill="#FFFFFF" font-size="7.8" font-weight="bold" textLength="20.1" lengthAdjust="spacingAndGlyphs">21-25:</text>
<text x="48" y="439.0" fill="#FFFFFF" font-size="7.8" font-weight="bold" textLength="32.9" lengthAdjust="spacingAndGlyphs">135 / 8.1%</text>
<text x="99" y="439.0" fill="#008B8B" font-size="7.8" font-weight="bold" textLength="32.9" lengthAdjust="spacingAndGlyphs">81 / 15.8%</text>
<text x="147.5" y="439.0" fill="#FFFFFF" font-size="7.8" font-weight="bold" textLength="26.2" lengthAdjust="spacingAndGlyphs">6 / 4.5%</text>
<text x="15" y="448.0" fill="#FFFFFF" font-size="7.8" font-weight="bold" textLength="20.5" lengthAdjust="spacingAndGlyphs">26-30:</text>
<text x="48" y="448.0" fill="#FFFFFF" font-size="7.8" font-weight="bold" textLength="29.9" lengthAdjust="spacingAndGlyphs">56 / 3.4%</text>
<text x="99" y="448.0" fill="#FFFFFF" font-size="7.8" font-weight="bold" textLength="29.9" lengthAdjust="spacingAndGlyphs">35 / 6.8%</text>
<text x="147.5" y="448.0" fill="#FFFFFF" font-size="7.8" font-weight="bold" textLength="29.6" lengthAdjust="spacingAndGlyphs">10 / 7.6%</text>
<text x="15" y="457.0" fill="#FFFFFF" font-size="7.8" font-weight="bold" textLength="20.1" lengthAdjust="spacingAndGlyphs">31-35:</text>
<text x="48" y="457.0" fill="#FFFFFF" font-size="7.8" font-weight="bold" textLength="29.6" lengthAdjust="spacingAndGlyphs">32 / 1.9%</text>
<text x="99" y="457.0" fill="#FFFFFF" font-size="7.8" font-weight="bold" textLength="29.9" lengthAdjust="spacingAndGlyphs">28 / 5.4%</text>
<text x="147.5" y="457.0" fill="#FFFFFF" font-size="7.8" font-weight="bold" textLength="26.2" lengthAdjust="spacingAndGlyphs">9 / 6.8%</text>
<text x="15" y="466.0" fill="#FFFFFF" font-size="7.8" font-weight="bold" textLength="20.5" lengthAdjust="spacingAndGlyphs">36-40:</text>
<text x="48" y="466.0" fill="#FFFFFF" font-size="7.8" font-weight="bold" textLength="29.6" lengthAdjust="spacingAndGlyphs">22 / 1.3%</text>
<text x="99" y="466.0" fill="#FFFFFF" font-size="7.8" font-weight="bold" textLength="29.9" lengthAdjust="spacingAndGlyphs">25 / 4.9%</text>
<text x="147.5" y="466.0" fill="#FFFFFF" font-size="7.8" font-weight="bold" textLength="25.9" lengthAdjust="spacingAndGlyphs">8 / 6.1%</text>
<text x="15" y="475.0" fill="#FFFFFF" font-size="7.8" font-weight="bold" textLength="20.1" lengthAdjust="spacingAndGlyphs">41-45:</text>
<text x="48" y="475.0" fill="#FFFFFF" font-size="7.8" font-weight="bold" textLength="26.2" lengthAdjust="spacingAndGlyphs">8 / 0.5%</text>
<text x="99" y="475.0" fill="#FFFFFF" font-size="7.8" font-weight="bold" textLength="29.6" lengthAdjust="spacingAndGlyphs">19 / 3.7%</text>
<text x="147.5" y="475.0" fill="#FFFFFF" font-size="7.8" font-weight="bold" textLength="29.2" lengthAdjust="spacingAndGlyphs">11 / 8.3%</text>
<text x="15" y="484.0" fill="#FFFFFF" font-size="7.8" font-weight="bold" textLength="20.5" lengthAdjust="spacingAndGlyphs">46-50:</text>
<text x="48" y="484.0" fill="#FFFFFF" font-size="7.8" font-weight="bold" textLength="26.2" lengthAdjust="spacingAndGlyphs">4 / 0.2%</text>
<text x="99" y="484.0" fill="#FFFFFF" font-size="7.8" font-weight="bold" textLength="29.6" lengthAdjust="spacingAndGlyphs">15 / 2.9%</text>
<text x="147.5" y="484.0" fill="#FFFFFF" font-size="7.8" font-weight="bold" textLength="26.2" lengthAdjust="spacingAndGlyphs">7 / 5.3%</text>
<text x="15" y="493.0" fill="#FFFFFF" font-size="7.8" font-weight="bold" textLength="20.1" lengthAdjust="spacingAndGlyphs">51-55:</text>
<text x="48" y="493.0" fill="#FFFFFF" font-size="7.8" font-weight="bold" textLength="26.2" lengthAdjust="spacingAndGlyphs">3 / 0.2%</text>
<text x="99" y="493.0" fill="#FFFFFF" font-size="7.8" font-weight="bold" textLength="25.9" lengthAdjust="spacingAndGlyphs">9 / 1.7%</text>
<text x="147.5" y="493.0" fill="#FFFFFF" font-size="7.8" font-weight="bold" textLength="26.2" lengthAdjust="spacingAndGlyphs">6 / 4.5%</text>
<text x="15" y="502.0" fill="#FFFFFF" font-size="7.8" font-weight="bold" textLength="20.5" lengthAdjust="spacingAndGlyphs">56-60:</text>
<text x="48" y="502.0" fill="#FFFFFF" font-size="7.8" font-weight="bold" textLength="25.6" lengthAdjust="spacingAndGlyphs">1 / 0.1%</text>
<text x="99" y="502.0" fill="#FFFFFF" font-size="7.8" font-weight="bold" textLength="25.9" lengthAdjust="spacingAndGlyphs">6 / 1.2%</text>
<text x="147.5" y="502.0" fill="#FFFFFF" font-size="7.8" font-weight="bold" textLength="26.2" lengthAdjust="spacingAndGlyphs">9 / 6.8%</text>
<text x="15" y="511.0" fill="#FFFFFF" font-size="7.8" font-weight="bold" textLength="20.1" lengthAdjust="spacingAndGlyphs">61-65:</text>
<text x="48" y="511.0" fill="#FFFFFF" font-size="7.8" font-weight="bold" textLength="26.2" lengthAdjust="spacingAndGlyphs">0 / 0.0%</text>
<text x="99" y="511.0" fill="#FFFFFF" font-size="7.8" font-weight="bold" textLength="25.9" lengthAdjust="spacingAndGlyphs">5 / 1.0%</text>
<text x="147.5" y="511.0" fill="#FFFFFF" font-size="7.8" font-weight="bold" textLength="26.2" lengthAdjust="spacingAndGlyphs">5 / 3.8%</text>
<text x="15" y="520.0" fill="#FFFFFF" font-size="7.8" font-weight="bold" textLength="20.5" lengthAdjust="spacingAndGlyphs">66-70:</text>
<text x="48" y="520.0" fill="#FFFFFF" font-size="7.8" font-weight="bold" textLength="26.2" lengthAdjust="spacingAndGlyphs">0 / 0.0%</text>
<text x="99" y="520.0" fill="#FFFFFF" font-size="7.8" font-weight="bold" textLength="26.2" lengthAdjust="spacingAndGlyphs">3 / 0.6%</text>
<text x="147.5" y="520.0" fill="#FFFFFF" font-size="7.8" font-weight="bold" textLength="26.2" lengthAdjust="spacingAndGlyphs">6 / 4.5%</text>
<text x="15" y="529.0" fill="#FFFFFF" font-size="7.8" font-weight="bold" textLength="20.1" lengthAdjust="spacingAndGlyphs">71-75:</text>
<text x="48" y="529.0" fill="#FFFFFF" font-size="7.8" font-weight="bold" textLength="26.2" lengthAdjust="spacingAndGlyphs">0 / 0.0%</text>
<text x="99" y="529.0" fill="#FFFFFF" font-size="7.8" font-weight="bold" textLength="26.2" lengthAdjust="spacingAndGlyphs">2 / 0.4%</text>
<text x="147.5" y="529.0" fill="#FFFFFF" font-size="7.8" font-weight="bold" textLength="26.2" lengthAdjust="spacingAndGlyphs">4 / 3.0%</text>
<text x="15" y="538.0" fill="#FFFFFF" font-size="7.8" font-weight="bold" textLength="20.5" lengthAdjust="spacingAndGlyphs">76-80:</text>
<text x="48" y="538.0" fill="#FFFFFF" font-size="7.8" font-weight="bold" textLength="26.2" lengthAdjust="spacingAndGlyphs">0 / 0.0%</text>
<text x="99" y="538.0" fill="#FFFFFF" font-size="7.8" font-weight="bold" textLength="25.9" lengthAdjust="spacingAndGlyphs">1 / 0.2%</text>
<text x="147.5" y="538.0" fill="#FFFFFF" font-size="7.8" font-weight="bold" textLength="26.2" lengthAdjust="spacingAndGlyphs">3 / 2.3%</text>
<text x="15" y="547.0" fill="#FFFFFF" font-size="7.8" font-weight="bold" textLength="20.1" lengthAdjust="spacingAndGlyphs">81-85:</text>
<text x="48" y="547.0" fill="#FFFFFF" font-size="7.8" font-weight="bold" textLength="26.2" lengthAdjust="spacingAndGlyphs">0 / 0.0%</text>
<text x="99" y="547.0" fill="#FFFFFF" font-size="7.8" font-weight="bold" textLength="25.9" lengthAdjust="spacingAndGlyphs">1 / 0.2%</text>
<text x="147.5" y="547.0" fill="#FFFFFF" font-size="7.8" font-weight="bold" textLength="26.2" lengthAdjust="spacingAndGlyphs">5 / 3.8%</text>
<text x="15" y="556.0" fill="#FFFFFF" font-size="7.8" font-weight="bold" textLength="20.5" lengthAdjust="spacingAndGlyphs">86-90:</text>
<text x="48" y="556.0" fill="#FFFFFF" font-size="7.8" font-weight="bold" textLength="26.2" lengthAdjust="spacingAndGlyphs">0 / 0.0%</text>
<text x="99" y="556.0" fill="#FFFFFF" font-size="7.8" font-weight="bold" textLength="26.2" lengthAdjust="spacingAndGlyphs">0 / 0.0%</text>
<text x="147.5" y="556.0" fill="#FFFFFF" font-size="7.8" font-weight="bold" textLength="25.9" lengthAdjust="spacingAndGlyphs">2 / 1.5%</text>
<text x="15" y="565.0" fill="#FFFFFF" font-size="7.8" font-weight="bold" textLength="20.1" lengthAdjust="spacingAndGlyphs">91-95:</text>
<text x="48" y="565.0" fill="#FFFFFF" font-size="7.8" font-weight="bold" textLength="26.2" lengthAdjust="spacingAndGlyphs">0 / 0.0%</text>
<text x="99" y="565.0" fill="#FFFFFF" font-size="7.8" font-weight="bold" textLength="25.9" lengthAdjust="spacingAndGlyphs">1 / 0.2%</text>
<text x="147.5" y="565.0" fill="#FFFFFF" font-size="7.8" font-weight="bold" textLength="26.2" lengthAdjust="spacingAndGlyphs">4 / 3.0%</text>
<text x="15" y="574.0" fill="#FFFFFF" font-size="7.8" font-weight="bold" textLength="23.8" lengthAdjust="spacingAndGlyphs">96-100:</text>
<text x="48" y="574.0" fill="#FFFFFF" font-size="7.8" font-weight="bold" textLength="26.2" lengthAdjust="spacingAndGlyphs">0 / 0.0%</text>
<text x="99" y="574.0" fill="#FFFFFF" font-size="7.8" font-weight="bold" textLength="26.2" lengthAdjust="spacingAndGlyphs">0 / 0.0%</text>
<text x="147.5" y="574.0" fill="#FFFFFF" font-size="7.8" font-weight="bold" textLength="25.9" lengthAdjust="spacingAndGlyphs">2 / 1.5%</text>
<text x="15" y="583.0" fill="#FFFFFF" font-size="7.8" font-weight="bold" textLength="26.8" lengthAdjust="spacingAndGlyphs">101-105:</text>
<text x="48" y="583.0" fill="#FFFFFF" font-size="7.8" font-weight="bold" textLength="26.2" lengthAdjust="spacingAndGlyphs">0 / 0.0%</text>
<text x="99" y="583.0" fill="#FFFFFF" font-size="7.8" font-weight="bold" textLength="26.2" lengthAdjust="spacingAndGlyphs">0 / 0.0%</text>
<text x="147.5" y="583.0" fill="#FFFFFF" font-size="7.8" font-weight="bold" textLength="26.2" lengthAdjust="spacingAndGlyphs">3 / 2.3%</text>
<text x="15" y="592.0" fill="#FFFFFF" font-size="7.8" font-weight="bold" textLength="26.8" lengthAdjust="spacingAndGlyphs">106-110:</text>
<text x="48" y="592.0" fill="#FFFFFF" font-size="7.8" font-weight="bold" textLength="26.2" lengthAdjust="spacingAndGlyphs">0 / 0.0%</text>
<text x="99" y="592.0" fill="#FFFFFF" font-size="7.8" font-weight="bold" textLength="26.2" lengthAdjust="spacingAndGlyphs">0 / 0.0%</text>
<text x="147.5" y="592.0" fill="#FFFFFF" font-size="7.8" font-weight="bold" textLength="25.9" lengthAdjust="spacingAndGlyphs">1 / 0.8%</text>
<text x="15" y="601.0" fill="#FFFFFF" font-size="7.8" font-weight="bold" textLength="26.0" lengthAdjust="spacingAndGlyphs">111-115:</text>
<text x="48" y="601.0" fill="#FFFFFF" font-size="7.8" font-weight="bold" textLength="26.2" lengthAdjust="spacingAndGlyphs">0 / 0.0%</text>
<text x="99" y="601.0" fill="#FFFFFF" font-size="7.8" font-weight="bold" textLength="26.2" lengthAdjust="spacingAndGlyphs">0 / 0.0%</text>
<text x="147.5" y="601.0" fill="#FFFFFF" font-size="7.8" font-weight="bold" textLength="25.9" lengthAdjust="spacingAndGlyphs">1 / 0.8%</text>
<text x="15" y="610.0" fill="#FFFFFF" font-size="7.8" font-weight="bold" textLength="26.8" lengthAdjust="spacingAndGlyphs">116-120:</text>
<text x="48" y="610.0" fill="#FFFFFF" font-size="7.8" font-weight="bold" textLength="26.2" lengthAdjust="spacingAndGlyphs">0 / 0.0%</text>
<text x="99" y="610.0" fill="#FFFFFF" font-size="7.8" font-weight="bold" textLength="26.2" lengthAdjust="spacingAndGlyphs">2 / 0.4%</text>
<text x="147.5" y="610.0" fill="#FFFFFF" font-size="7.8" font-weight="bold" textLength="26.2" lengthAdjust="spacingAndGlyphs">3 / 2.3%</text>
<text x="15" y="619.0" fill="#FFFFFF" font-size="7.8" font-weight="bold" textLength="26.8" lengthAdjust="spacingAndGlyphs">121-125:</text>
<text x="48" y="619.0" fill="#FFFFFF" font-size="7.8" font-weight="bold" textLength="25.6" lengthAdjust="spacingAndGlyphs">1 / 0.1%</text>
<text x="99" y="619.0" fill="#FFFFFF" font-size="7.8" font-weight="bold" textLength="26.2" lengthAdjust="spacingAndGlyphs">0 / 0.0%</text>
<text x="147.5" y="619.0" fill="#FFFFFF" font-size="7.8" font-weight="bold" textLength="26.2" lengthAdjust="spacingAndGlyphs">0 / 0.0%</text>
<text x="15" y="628.0" fill="#FFFFFF" font-size="7.8" font-weight="bold" textLength="27.1" lengthAdjust="spacingAndGlyphs">126-130:</text>
<text x="48" y="628.0" fill="#FFFFFF" font-size="7.8" font-weight="bold" textLength="26.2" lengthAdjust="spacingAndGlyphs">0 / 0.0%</text>
<text x="99" y="628.0" fill="#FFFFFF" font-size="7.8" font-weight="bold" textLength="26.2" lengthAdjust="spacingAndGlyphs">0 / 0.0%</text>
<text x="147.5" y="628.0" fill="#FFFFFF" font-size="7.8" font-weight="bold" textLength="25.9" lengthAdjust="spacingAndGlyphs">2 / 1.5%</text>
<text x="15" y="637.0" fill="#FFFFFF" font-size="7.8" font-weight="bold" textLength="26.8" lengthAdjust="spacingAndGlyphs">131-135:</text>
<text x="48" y="637.0" fill="#FFFFFF" font-size="7.8" font-weight="bold" textLength="26.2" lengthAdjust="spacingAndGlyphs">0 / 0.0%</text>
<text x="99" y="637.0" fill="#FFFFFF" font-size="7.8" font-weight="bold" textLength="26.2" lengthAdjust="spacingAndGlyphs">0 / 0.0%</text>
<text x="147.5" y="637.0" fill="#FFFFFF" font-size="7.8" font-weight="bold" textLength="26.2" lengthAdjust="spacingAndGlyphs">0 / 0.0%</text>
<text x="15" y="646.0" fill="#FFFFFF" font-size="7.8" font-weight="bold" textLength="27.1" lengthAdjust="spacingAndGlyphs">136-140:</text>
<text x="48" y="646.0" fill="#FFFFFF" font-size="7.8" font-weight="bold" textLength="26.2" lengthAdjust="spacingAndGlyphs">0 / 0.0%</text>
<text x="99" y="646.0" fill="#FFFFFF" font-size="7.8" font-weight="bold" textLength="25.9" lengthAdjust="spacingAndGlyphs">1 / 0.2%</text>
<text x="147.5" y="646.0" fill="#FFFFFF" font-size="7.8" font-weight="bold" textLength="26.2" lengthAdjust="spacingAndGlyphs">0 / 0.0%</text>
<text x="15" y="655.0" fill="#FFFFFF" font-size="7.8" font-weight="bold" textLength="26.8" lengthAdjust="spacingAndGlyphs">141-145:</text>
<text x="48" y="655.0" fill="#FFFFFF" font-size="7.8" font-weight="bold" textLength="26.2" lengthAdjust="spacingAndGlyphs">0 / 0.0%</text>
<text x="99" y="655.0" fill="#FFFFFF" font-size="7.8" font-weight="bold" textLength="26.2" lengthAdjust="spacingAndGlyphs">0 / 0.0%</text>
<text x="147.5" y="655.0" fill="#FFFFFF" font-size="7.8" font-weight="bold" textLength="26.2" lengthAdjust="spacingAndGlyphs">0 / 0.0%</text>
<text x="15" y="664.0" fill="#FFFFFF" font-size="7.8" font-weight="bold" textLength="27.1" lengthAdjust="spacingAndGlyphs">146-150:</text>
<text x="48" y="664.0" fill="#FFFFFF" font-size="7.8" font-weight="bold" textLength="26.2" lengthAdjust="spacingAndGlyphs">0 / 0.0%</text>
<text x="99" y="664.0" fill="#FFFFFF" font-size="7.8" font-weight="bold" textLength="26.2" lengthAdjust="spacingAndGlyphs">0 / 0.0%</text>
<text x="147.5" y="664.0" fill="#FFFFFF" font-size="7.8" font-weight="bold" textLength="26.2" lengthAdjust="spacingAndGlyphs">3 / 2.3%</text>
<text x="15" y="673.0" fill="#FFFFFF" font-size="7.8" font-weight="bold" textLength="17.0" lengthAdjust="spacingAndGlyphs">&gt;150:</text>
<text x="48" y="673.0" fill="#FFFFFF" font-size="7.8" font-weight="bold" textLength="26.2" lengthAdjust="spacingAndGlyphs">0 / 0.0%</text>
<text x="99" y="673.0" fill="#FFFFFF" font-size="7.8" font-weight="bold" textLength="26.2" lengthAdjust="spacingAndGlyphs">0 / 0.0%</text>
<text x="147.5" y="673.0" fill="#FFFFFF" font-size="7.8" font-weight="bold" textLength="25.9" lengthAdjust="spacingAndGlyphs">1 / 0.8%</text>
<rect x="9.5" y="393.5" width="182" height="40" fill="none" stroke="#7B7BEE" stroke-width="5"/>
<text x="826" y="112.6" fill="#FF0000" font-size="14" textLength="95" lengthAdjust="spacingAndGlyphs">Ivey PMI  CAD</text>
<text x="933" y="112.6" fill="#FF0000" font-size="14" textLength="28.6" lengthAdjust="spacingAndGlyphs">1:25</text>
<text x="749" y="132.5" fill="#FFFF00" font-size="14" textLength="173" lengthAdjust="spacingAndGlyphs">Natural Gas Storage  USD</text>
<text x="933" y="132.5" fill="#FFFF00" font-size="14" textLength="28.6" lengthAdjust="spacingAndGlyphs">1:55</text>
<text x="727" y="153" fill="#FFFF00" font-size="14" textLength="194" lengthAdjust="spacingAndGlyphs">AIG Construction Index  AUD</text>
<text x="933" y="153" fill="#FFFF00" font-size="14" textLength="28.6" lengthAdjust="spacingAndGlyphs">9:55</text>
<text x="646" y="173" fill="#FF0000" font-size="14" textLength="275" lengthAdjust="spacingAndGlyphs">BOJ Press Conference &lt;&lt;Tentative&gt;&gt;  JPY</text>
<text x="933" y="173" fill="#FF0000" font-size="14" textLength="28.6" lengthAdjust="spacingAndGlyphs">5:26</text>
<text x="762" y="193" fill="#FFFF00" font-size="14" textLength="159" lengthAdjust="spacingAndGlyphs">Leading Indicators  CNY</text>
<text x="933" y="193" fill="#FFFF00" font-size="14" textLength="28.6" lengthAdjust="spacingAndGlyphs">6:25</text>
<text x="755.6" y="212.5" fill="#FFFF00" font-size="14" textLength="166" lengthAdjust="spacingAndGlyphs">Unemployment Rate  AUD</text>
<text x="929" y="212.5" fill="#FFFF00" font-size="14" textLength="32.6" lengthAdjust="spacingAndGlyphs">17:10</text>
<text x="798" y="254.6" fill="#FFFFFF" font-size="16.5" textLength="24" lengthAdjust="spacingAndGlyphs">.:   3</text>
<text x="786" y="273" fill="#FFFFFF" font-size="16.5" textLength="36" lengthAdjust="spacingAndGlyphs">20:35</text>
<text x="696.7" y="294" fill="#FFFFFF" font-size="16.5" textLength="154.3" lengthAdjust="spacingAndGlyphs">45 GMT Local Time</text>
<text x="921.7" y="232.2" fill="#A0A0A0" font-size="10.5" text-anchor="end">Sydney</text>
<text x="935.5" y="232.2" fill="#A0A0A0" font-size="10.5" textLength="40.5" lengthAdjust="spacingAndGlyphs">12:35:22</text>
<text x="921.7" y="244.3" fill="#A0A0A0" font-size="10.5" text-anchor="end">Tokyo</text>
<text x="935.5" y="244.3" fill="#A0A0A0" font-size="10.5" textLength="40.5" lengthAdjust="spacingAndGlyphs">01:35:22</text>
<text x="921.7" y="256.3" fill="#A0A0A0" font-size="10.5" text-anchor="end">Moscow</text>
<text x="935.5" y="256.3" fill="#A0A0A0" font-size="10.5" textLength="40.5" lengthAdjust="spacingAndGlyphs">23:35:22</text>
<text x="921.7" y="268.4" fill="#A0A0A0" font-size="10.5" text-anchor="end">Frankfurt</text>
<text x="935.5" y="268.4" fill="#A0A0A0" font-size="10.5" textLength="40.5" lengthAdjust="spacingAndGlyphs">21:35:22</text>
<text x="921.7" y="280.5" fill="#00FFFF" font-size="10.5" text-anchor="end">* Hong Kong</text>
<text x="935.5" y="280.5" fill="#00FFFF" font-size="10.5" textLength="40.5" lengthAdjust="spacingAndGlyphs">14:35:22</text>
<text x="921.7" y="292.6" fill="#00FFFF" font-size="10.5" text-anchor="end">* London</text>
<text x="935.5" y="292.6" fill="#00FFFF" font-size="10.5" textLength="40.5" lengthAdjust="spacingAndGlyphs">13:35:22</text>
<text x="921.7" y="304.6" fill="#A0A0A0" font-size="10.5" text-anchor="end">UTC/GMT</text>
<text x="935.5" y="304.6" fill="#A0A0A0" font-size="10.5" textLength="40.5" lengthAdjust="spacingAndGlyphs">12:35:22</text>
<text x="921.7" y="316.7" fill="#00FFFF" font-size="10.5" text-anchor="end">* New York</text>
<text x="935.5" y="316.7" fill="#00FFFF" font-size="10.5" textLength="40.5" lengthAdjust="spacingAndGlyphs">08:35:22</text>
<text x="921.7" y="328.8" fill="#A0A0A0" font-size="10.5" text-anchor="end">Local</text>
<text x="935.5" y="328.8" fill="#A0A0A0" font-size="10.5" textLength="40.5" lengthAdjust="spacingAndGlyphs">20:35:00</text>
<text x="556" y="324" fill="#FF00FF" font-size="8.5" textLength="170" lengthAdjust="spacingAndGlyphs">OD5x12x10=M300Hasellighsil(1.0445)</text>
<text x="530" y="348.5" fill="#FF00FF" font-size="8.5" textLength="135" lengthAdjust="spacingAndGlyphs">OD5x12x10=M300Hasellighzone</text>
<text x="540" y="372.5" fill="#00FFFF" font-size="8.5" textLength="130" lengthAdjust="spacingAndGlyphs">OD5x12x10=M300HaselHighzone</text>
<text x="591" y="404.5" fill="#9370DB" font-size="10" textLength="80" lengthAdjust="spacingAndGlyphs">Psych Zone Top Bo</text>
<text x="614" y="416" fill="#9370DB" font-size="10" textLength="50" lengthAdjust="spacingAndGlyphs">Psych Line</text>
<text x="583" y="427.5" fill="#9370DB" font-size="10" textLength="85" lengthAdjust="spacingAndGlyphs">Psych Zone Bottom</text>
<text x="724" y="483" fill="#00FFFF" font-size="9" textLength="247" lengthAdjust="spacingAndGlyphs">Spread : 4.0 pips -&gt; 3.50 % of Avg D1 Range -&gt; 114.3 pips</text>
<text x="864" y="500" fill="#FFFFFF" font-size="9" textLength="107" lengthAdjust="spacingAndGlyphs">* D1(last 20 Thursdays) *</text>
<text x="897.5" y="510.5" fill="#FFFFFF" font-size="9" textLength="73.5" lengthAdjust="spacingAndGlyphs">Range : 97.4 Pips</text>
<text x="867.5" y="521" fill="#00FFFF" font-size="9" textLength="103.5" lengthAdjust="spacingAndGlyphs">Spread/Range % : 4.11 %</text>
<text x="901.5" y="531.5" fill="#FFFFFF" font-size="9" textLength="69.5" lengthAdjust="spacingAndGlyphs">CandleLoad : OK</text>
<text x="825" y="570.6" fill="#FFFFFF" font-size="9" textLength="146" lengthAdjust="spacingAndGlyphs">* PTe : Previous 1.0 months data *</text>
<text x="872.5" y="579.5" fill="#FFFFFF" font-size="9" textLength="98.5" lengthAdjust="spacingAndGlyphs">M5 : 1.55 PTe-&gt;7.7 pips</text>
<text x="862" y="588.5" fill="#FFFFFF" font-size="9" textLength="109" lengthAdjust="spacingAndGlyphs">M15 : 0.79 PTe-&gt;11.8 pips</text>
<text x="862" y="597.5" fill="#FFFFFF" font-size="9" textLength="109" lengthAdjust="spacingAndGlyphs">M30 : 0.57 PTe-&gt;17.0 pips</text>
<text x="862" y="606.5" fill="#FFFFFF" font-size="9" textLength="109" lengthAdjust="spacingAndGlyphs">M60 : 0.41 PTe-&gt;24.5 pips</text>
<text x="857.5" y="615.5" fill="#FFFFFF" font-size="9" textLength="113.5" lengthAdjust="spacingAndGlyphs">M240 : 0.20 PTe-&gt;48.7 pips</text>
<text x="862" y="624.5" fill="#FFFFFF" font-size="9" textLength="109" lengthAdjust="spacingAndGlyphs">M34 : 0.50 PTe-&gt;20.5 Pips</text>
<text x="880" y="633.8" fill="#00FFFF" font-size="9" textLength="91" lengthAdjust="spacingAndGlyphs">Live Spread : 4.0 pips</text>
<text x="757" y="642.8" fill="#00FFFF" font-size="9" textLength="214" lengthAdjust="spacingAndGlyphs">5 O.PTe-&gt; Time/Price Volatility (w spread) 16.5 pips</text>
<text x="759" y="651.8" fill="#00FFFF" font-size="9" textLength="212" lengthAdjust="spacingAndGlyphs">.0 O.PTe-&gt; Time/Price Volatility (w spread) 8.3 pips</text>
<text x="901.5" y="662" fill="#FFFFFF" font-size="9" textLength="69.5" lengthAdjust="spacingAndGlyphs">CandleLoad : OK</text>
<rect x="414" y="147" width="156" height="25" fill="#fff"/>
<text x="414.6" y="161.1" fill="#7B7BE8" font-size="15" font-family="Liberation Serif" textLength="140.7" lengthAdjust="spacingAndGlyphs">Price starts going down</text>
<rect x="582" y="209" width="215" height="82.5" fill="#fff"/>
<text x="585.7" y="223.8" fill="#7B7BE8" font-size="15" font-family="Liberation Serif" textLength="200.3" lengthAdjust="spacingAndGlyphs">Price arrives back at a previously</text>
<text x="582.5" y="242.8" fill="#7B7BE8" font-size="15" font-family="Liberation Serif" textLength="190.5" lengthAdjust="spacingAndGlyphs">broken support level, which has</text>
<text x="582.5" y="261.8" fill="#7B7BE8" font-size="15" font-family="Liberation Serif" textLength="203.5" lengthAdjust="spacingAndGlyphs">now become a resistance level, so</text>
<text x="582.5" y="280.8" fill="#7B7BE8" font-size="15" font-family="Liberation Serif" textLength="135.2" lengthAdjust="spacingAndGlyphs">a good reason to short</text>
<rect x="822" y="153" width="108" height="134.5" fill="#fff"/>
<text x="822.5" y="167.3" fill="#7B7BE8" font-size="15" font-family="Liberation Serif" textLength="103.9" lengthAdjust="spacingAndGlyphs">Price bounces 20</text>
<text x="822.5" y="186.3" fill="#7B7BE8" font-size="15" font-family="Liberation Serif" textLength="66.0" lengthAdjust="spacingAndGlyphs">pips off the</text>
<text x="822.5" y="205.3" fill="#7B7BE8" font-size="15" font-family="Liberation Serif" textLength="89.9" lengthAdjust="spacingAndGlyphs">resistance level</text>
<text x="822.5" y="224.3" fill="#7B7BE8" font-size="15" font-family="Liberation Serif" textLength="71.4" lengthAdjust="spacingAndGlyphs">from the D1</text>
<text x="822.5" y="243.3" fill="#7B7BE8" font-size="15" font-family="Liberation Serif" textLength="65.5" lengthAdjust="spacingAndGlyphs">timeframe :</text>
<text x="822.5" y="262.3" fill="#7B7BE8" font-size="15" font-family="Liberation Serif" textLength="102.1" lengthAdjust="spacingAndGlyphs">ENTER TRADE</text>
<text x="822.5" y="281.3" fill="#7B7BE8" font-size="15" font-family="Liberation Serif" textLength="37.5" lengthAdjust="spacingAndGlyphs">NOW</text>
<rect x="445" y="347" width="94" height="101.5" fill="#fff"/>
<text x="445.5" y="361.6" fill="#7B7BE8" font-size="15" font-family="Liberation Serif" textLength="85.9" lengthAdjust="spacingAndGlyphs">Price breaks a</text>
<text x="445.5" y="380.6" fill="#7B7BE8" font-size="15" font-family="Liberation Serif" textLength="93.0" lengthAdjust="spacingAndGlyphs">support level of</text>
<text x="445.5" y="399.6" fill="#7B7BE8" font-size="15" font-family="Liberation Serif" textLength="46.5" lengthAdjust="spacingAndGlyphs">a higher</text>
<text x="445.5" y="418.6" fill="#7B7BE8" font-size="15" font-family="Liberation Serif" textLength="77.0" lengthAdjust="spacingAndGlyphs">timeframe (in</text>
<text x="445.5" y="437.6" fill="#7B7BE8" font-size="15" font-family="Liberation Serif" textLength="82.1" lengthAdjust="spacingAndGlyphs">this case, D1)</text>
<rect x="50" y="450" width="367" height="145" fill="#fff"/>
<text x="55.2" y="464.6" fill="#000" font-size="15" font-family="Liberation Serif" textLength="301.8" lengthAdjust="spacingAndGlyphs">Statistics proving when price moves 20 pips, it is a</text>
<text x="50.3" y="483.6" fill="#000" font-size="15" font-family="Liberation Serif" textLength="364.7" lengthAdjust="spacingAndGlyphs">significant one. When applied to reversals of price movement</text>
<text x="50.3" y="502.6" fill="#000" font-size="15" font-family="Liberation Serif" textLength="316.3" lengthAdjust="spacingAndGlyphs">on ANY timeframe, it means a 20 pip movement = a</text>
<text x="50.3" y="521.6" fill="#000" font-size="15" font-family="Liberation Serif" textLength="340.9" lengthAdjust="spacingAndGlyphs">possible reversal, on the minimal, some retracement. This</text>
<text x="50.3" y="540.6" fill="#000" font-size="15" font-family="Liberation Serif" textLength="325.7" lengthAdjust="spacingAndGlyphs">also means the typical size of an SR zone is 20 as well.</text>
<rect x="670" y="325" width="152" height="132.5" fill="#fff"/>
<text x="676" y="339.4" fill="#000" font-size="15" font-family="Liberation Serif" textLength="115.3" lengthAdjust="spacingAndGlyphs">Yes this is the short</text>
<text x="670.3" y="358.4" fill="#000" font-size="15" font-family="Liberation Serif" textLength="142.7" lengthAdjust="spacingAndGlyphs">trigger (lower timeframe</text>
<text x="670.3" y="377.4" fill="#000" font-size="15" font-family="Liberation Serif" textLength="107.7" lengthAdjust="spacingAndGlyphs">based). But I only</text>
<text x="670.3" y="396.4" fill="#000" font-size="15" font-family="Liberation Serif" textLength="148.4" lengthAdjust="spacingAndGlyphs">accepted this trigger as a</text>
<text x="670.3" y="415.4" fill="#000" font-size="15" font-family="Liberation Serif" textLength="122.7" lengthAdjust="spacingAndGlyphs">good and valid trade</text>
<text x="670.3" y="434.4" fill="#000" font-size="15" font-family="Liberation Serif" textLength="147.4" lengthAdjust="spacingAndGlyphs">based off information off</text>
<text x="670.3" y="453.4" fill="#000" font-size="15" font-family="Liberation Serif" textLength="139.9" lengthAdjust="spacingAndGlyphs">other larger timeframes.</text>
<rect x="576" y="466" width="112" height="41" fill="#fff"/>
<text x="576.3" y="480.9" fill="#7B7BE8" font-size="15" font-family="Liberation Serif" textLength="82.0" lengthAdjust="spacingAndGlyphs">Price starts to</text>
<text x="576.3" y="499.9" fill="#7B7BE8" font-size="15" font-family="Liberation Serif" textLength="102.3" lengthAdjust="spacingAndGlyphs">retrace from here</text>
<rect x="562" y="517" width="197" height="193.5" fill="#fff"/>
<text x="562.3" y="531.2" fill="#7B7BE8" font-size="15" font-family="Liberation Serif" textLength="141.6" lengthAdjust="spacingAndGlyphs">Note the squeeze of the</text>
<text x="562.3" y="550.2" fill="#7B7BE8" font-size="15" font-family="Liberation Serif" textLength="196.0" lengthAdjust="spacingAndGlyphs">channels of the lower timeframe :</text>
<text x="562.3" y="569.2" fill="#7B7BE8" font-size="15" font-family="Liberation Serif" textLength="186.1" lengthAdjust="spacingAndGlyphs">this means it has no more room</text>
<text x="562.3" y="588.2" fill="#7B7BE8" font-size="15" font-family="Liberation Serif" textLength="162.9" lengthAdjust="spacingAndGlyphs">to go down, and is going to</text>
<text x="562.3" y="607.2" fill="#7B7BE8" font-size="15" font-family="Liberation Serif" textLength="184.7" lengthAdjust="spacingAndGlyphs">retrace soon. Its possible to go</text>
<text x="562.3" y="626.2" fill="#7B7BE8" font-size="15" font-family="Liberation Serif" textLength="168.7" lengthAdjust="spacingAndGlyphs">long here, but I won't take it</text>
<text x="562.3" y="645.2" fill="#7B7BE8" font-size="15" font-family="Liberation Serif" textLength="186.9" lengthAdjust="spacingAndGlyphs">because the 'major trend' is still</text>
<text x="562.3" y="664.2" fill="#7B7BE8" font-size="15" font-family="Liberation Serif" textLength="178.1" lengthAdjust="spacingAndGlyphs">SHORT. If you really want to</text>
<text x="562.3" y="683.2" fill="#7B7BE8" font-size="15" font-family="Liberation Serif" textLength="196.0" lengthAdjust="spacingAndGlyphs">try trading, scalp 5 pips long and</text>
<text x="562.3" y="702.2" fill="#7B7BE8" font-size="15" font-family="Liberation Serif" textLength="51.9" lengthAdjust="spacingAndGlyphs">no more.</text>
</svg></body></html>
